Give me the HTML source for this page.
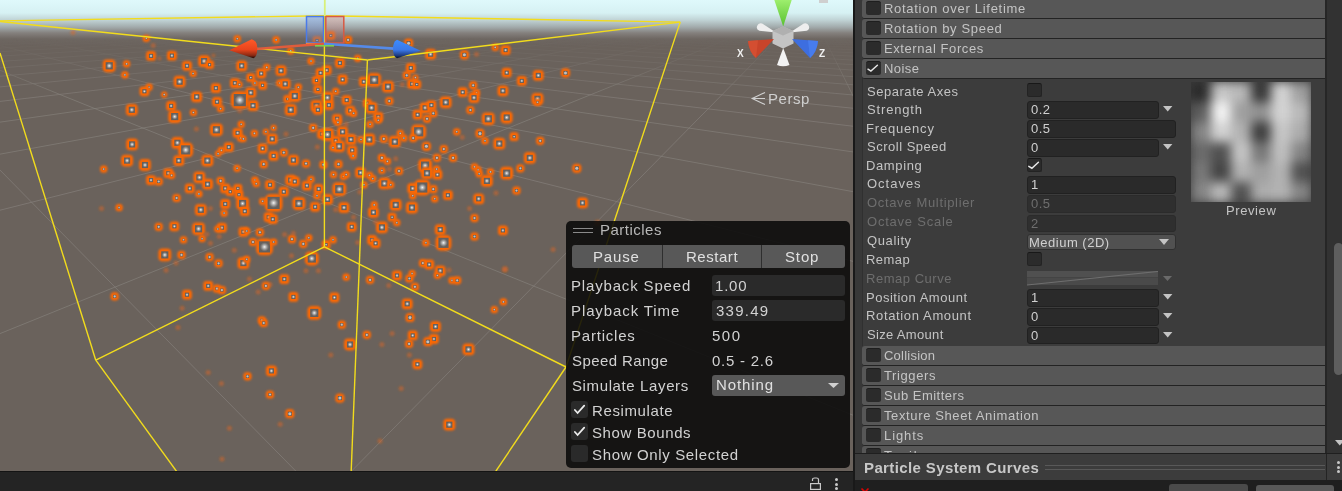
<!DOCTYPE html><html><head><meta charset="utf-8"><style>
html,body{margin:0;padding:0;width:1342px;height:491px;overflow:hidden;background:#383838}
body{position:relative;font-family:"Liberation Sans",sans-serif}
.t{position:absolute;white-space:nowrap;will-change:transform}
.r{position:absolute}
</style></head><body><div id="scene" style="position:absolute;left:0;top:0;width:853px;height:471px;overflow:hidden;background:linear-gradient(#dff9fb 0px,#d6f1f3 13px,#c0d3d5 20px,#a2abac 27px,#84807d 33px,#6d6661 39px,#6a625c 46px,#6a625c 471px)">
<svg width="853" height="471" style="position:absolute;left:0;top:0"><defs><filter id="bl" x="-50%" y="-50%" width="200%" height="200%"><feGaussianBlur stdDeviation="0.8"/></filter><filter id="bl2" x="-50%" y="-50%" width="200%" height="200%"><feGaussianBlur stdDeviation="1"/></filter><radialGradient id="pc"><stop offset="0" stop-color="#fff" stop-opacity="0.95"/><stop offset="0.5" stop-color="#ddd" stop-opacity="0.5"/><stop offset="1" stop-color="#aaa" stop-opacity="0"/></radialGradient></defs><defs><linearGradient id="gm" gradientUnits="userSpaceOnUse" x1="0" y1="0" x2="0" y2="471"><stop offset="0" stop-color="#000"/><stop offset="0.08" stop-color="#000"/><stop offset="0.21" stop-color="#fff"/><stop offset="1" stop-color="#fff"/></linearGradient><mask id="gmask" maskUnits="userSpaceOnUse" x="0" y="0" width="853" height="471"><rect width="853" height="471" fill="url(#gm)"/></mask></defs><g stroke="#85807b" stroke-width="1" fill="none" mask="url(#gmask)"><line x1="731.2" y1="6.7" x2="-3159.6" y2="15.8" stroke-opacity="0.00"/><line x1="731.7" y1="6.7" x2="-3159.5" y2="15.9" stroke-opacity="0.00"/><line x1="732.2" y1="6.7" x2="-3159.5" y2="16.0" stroke-opacity="0.00"/><line x1="732.6" y1="6.7" x2="-3159.5" y2="16.1" stroke-opacity="0.00"/><line x1="733.1" y1="6.7" x2="-3159.5" y2="16.2" stroke-opacity="0.00"/><line x1="733.6" y1="6.7" x2="-3159.5" y2="16.4" stroke-opacity="0.00"/><line x1="734.1" y1="6.7" x2="-3159.4" y2="16.5" stroke-opacity="0.00"/><line x1="734.5" y1="6.7" x2="-3159.4" y2="16.6" stroke-opacity="0.00"/><line x1="735.0" y1="6.7" x2="-3159.4" y2="16.7" stroke-opacity="0.00"/><line x1="735.5" y1="6.7" x2="-3159.4" y2="16.9" stroke-opacity="0.00"/><line x1="736.0" y1="6.7" x2="-3159.3" y2="17.0" stroke-opacity="0.00"/><line x1="736.4" y1="6.7" x2="-3159.3" y2="17.1" stroke-opacity="0.00"/><line x1="736.9" y1="6.7" x2="-3159.3" y2="17.3" stroke-opacity="0.00"/><line x1="737.4" y1="6.7" x2="-3159.3" y2="17.4" stroke-opacity="0.00"/><line x1="737.9" y1="6.7" x2="-3159.2" y2="17.6" stroke-opacity="0.00"/><line x1="738.3" y1="6.7" x2="-3159.2" y2="17.7" stroke-opacity="0.00"/><line x1="738.8" y1="6.7" x2="-3159.2" y2="17.8" stroke-opacity="0.00"/><line x1="739.3" y1="6.7" x2="-3159.2" y2="18.0" stroke-opacity="0.00"/><line x1="739.8" y1="6.7" x2="-3159.1" y2="18.1" stroke-opacity="0.00"/><line x1="740.3" y1="6.7" x2="-3159.1" y2="18.3" stroke-opacity="0.00"/><line x1="740.7" y1="6.7" x2="-3159.1" y2="18.4" stroke-opacity="0.00"/><line x1="741.2" y1="6.7" x2="-3159.1" y2="18.6" stroke-opacity="0.00"/><line x1="741.7" y1="6.7" x2="-3159.0" y2="18.8" stroke-opacity="0.00"/><line x1="742.2" y1="6.7" x2="-3159.0" y2="18.9" stroke-opacity="0.00"/><line x1="742.7" y1="6.7" x2="-3159.0" y2="19.1" stroke-opacity="0.00"/><line x1="743.2" y1="6.7" x2="-3158.9" y2="19.3" stroke-opacity="0.00"/><line x1="743.6" y1="6.7" x2="-3158.9" y2="19.4" stroke-opacity="0.00"/><line x1="744.1" y1="6.7" x2="-3158.9" y2="19.6" stroke-opacity="0.00"/><line x1="744.6" y1="6.7" x2="-3158.9" y2="19.8" stroke-opacity="0.00"/><line x1="745.1" y1="6.7" x2="-3158.8" y2="19.9" stroke-opacity="0.00"/><line x1="745.6" y1="6.7" x2="-3158.8" y2="20.1" stroke-opacity="0.00"/><line x1="746.1" y1="6.7" x2="-3158.8" y2="20.3" stroke-opacity="0.00"/><line x1="746.5" y1="6.7" x2="-3158.7" y2="20.5" stroke-opacity="0.00"/><line x1="747.0" y1="6.7" x2="-3158.7" y2="20.7" stroke-opacity="0.00"/><line x1="747.5" y1="6.7" x2="-3158.7" y2="20.9" stroke-opacity="0.00"/><line x1="748.0" y1="6.7" x2="-3158.6" y2="21.1" stroke-opacity="0.00"/><line x1="748.5" y1="6.7" x2="-3158.6" y2="21.3" stroke-opacity="0.00"/><line x1="749.0" y1="6.7" x2="-3158.5" y2="21.5" stroke-opacity="0.00"/><line x1="749.5" y1="6.7" x2="-3158.5" y2="21.7" stroke-opacity="0.00"/><line x1="750.0" y1="6.7" x2="-3158.5" y2="21.9" stroke-opacity="0.00"/><line x1="750.5" y1="6.8" x2="-3158.4" y2="22.1" stroke-opacity="0.00"/><line x1="750.9" y1="6.8" x2="-3158.4" y2="22.3" stroke-opacity="0.00"/><line x1="751.4" y1="6.8" x2="-3158.4" y2="22.5" stroke-opacity="0.00"/><line x1="751.9" y1="6.8" x2="-3158.3" y2="22.8" stroke-opacity="0.00"/><line x1="752.4" y1="6.8" x2="-3158.3" y2="23.0" stroke-opacity="0.00"/><line x1="752.9" y1="6.8" x2="-3158.2" y2="23.2" stroke-opacity="0.00"/><line x1="753.4" y1="6.8" x2="-3158.2" y2="23.5" stroke-opacity="0.00"/><line x1="753.9" y1="6.8" x2="-3158.1" y2="23.7" stroke-opacity="0.00"/><line x1="754.4" y1="6.8" x2="-3158.1" y2="24.0" stroke-opacity="0.00"/><line x1="754.9" y1="6.8" x2="-3158.1" y2="24.2" stroke-opacity="0.00"/><line x1="755.4" y1="6.8" x2="-3158.0" y2="24.5" stroke-opacity="0.00"/><line x1="755.9" y1="6.8" x2="-3158.0" y2="24.7" stroke-opacity="0.00"/><line x1="756.4" y1="6.8" x2="-3157.9" y2="25.0" stroke-opacity="0.00"/><line x1="756.9" y1="6.8" x2="-3157.9" y2="25.3" stroke-opacity="0.00"/><line x1="757.4" y1="6.8" x2="-3157.8" y2="25.5" stroke-opacity="0.00"/><line x1="757.9" y1="6.8" x2="-3157.8" y2="25.8" stroke-opacity="0.00"/><line x1="758.4" y1="6.8" x2="-3157.7" y2="26.1" stroke-opacity="0.00"/><line x1="758.9" y1="6.8" x2="-3157.7" y2="26.4" stroke-opacity="0.00"/><line x1="759.4" y1="6.8" x2="-3157.6" y2="26.7" stroke-opacity="0.00"/><line x1="759.9" y1="6.8" x2="-3157.5" y2="27.0" stroke-opacity="0.00"/><line x1="760.4" y1="6.8" x2="-3157.5" y2="27.3" stroke-opacity="0.00"/><line x1="760.9" y1="6.8" x2="-3157.4" y2="27.7" stroke-opacity="0.00"/><line x1="761.4" y1="6.8" x2="-3157.4" y2="28.0" stroke-opacity="0.00"/><line x1="761.9" y1="6.8" x2="-3157.3" y2="28.3" stroke-opacity="0.00"/><line x1="762.4" y1="6.8" x2="-3157.2" y2="28.7" stroke-opacity="0.00"/><line x1="762.9" y1="6.8" x2="-3157.2" y2="29.0" stroke-opacity="0.00"/><line x1="763.4" y1="6.8" x2="-3157.1" y2="29.4" stroke-opacity="0.00"/><line x1="763.9" y1="6.8" x2="-3157.1" y2="29.8" stroke-opacity="0.00"/><line x1="764.4" y1="6.8" x2="-3157.0" y2="30.1" stroke-opacity="0.00"/><line x1="764.9" y1="6.8" x2="-3156.9" y2="30.5" stroke-opacity="0.00"/><line x1="765.4" y1="6.8" x2="-3156.8" y2="30.9" stroke-opacity="0.00"/><line x1="765.9" y1="6.8" x2="-3156.8" y2="31.3" stroke-opacity="0.00"/><line x1="766.4" y1="6.8" x2="-3156.7" y2="31.7" stroke-opacity="0.00"/><line x1="766.9" y1="6.8" x2="-3156.6" y2="32.2" stroke-opacity="0.00"/><line x1="767.5" y1="6.8" x2="-3156.5" y2="32.6" stroke-opacity="0.00"/><line x1="768.0" y1="6.8" x2="-3156.5" y2="33.1" stroke-opacity="0.00"/><line x1="768.5" y1="6.8" x2="-3156.4" y2="33.5" stroke-opacity="0.00"/><line x1="769.0" y1="6.8" x2="-3156.3" y2="34.0" stroke-opacity="0.00"/><line x1="769.5" y1="6.8" x2="-3156.2" y2="34.5" stroke-opacity="0.00"/><line x1="770.0" y1="6.8" x2="-3156.1" y2="35.0" stroke-opacity="0.00"/><line x1="770.5" y1="6.8" x2="-3156.0" y2="35.5" stroke-opacity="0.00"/><line x1="771.0" y1="6.8" x2="-3155.9" y2="36.0" stroke-opacity="0.01"/><line x1="771.5" y1="6.8" x2="-3155.8" y2="36.6" stroke-opacity="0.02"/><line x1="772.1" y1="6.8" x2="-3155.7" y2="37.1" stroke-opacity="0.03"/><line x1="772.6" y1="6.8" x2="-3155.6" y2="37.7" stroke-opacity="0.04"/><line x1="773.1" y1="6.8" x2="-3155.5" y2="38.3" stroke-opacity="0.05"/><line x1="773.6" y1="6.8" x2="-3155.4" y2="38.9" stroke-opacity="0.06"/><line x1="774.1" y1="6.8" x2="-3155.3" y2="39.5" stroke-opacity="0.07"/><line x1="774.6" y1="6.8" x2="-3155.2" y2="40.2" stroke-opacity="0.08"/><line x1="775.2" y1="6.8" x2="-3155.0" y2="40.9" stroke-opacity="0.09"/><line x1="775.7" y1="6.8" x2="-3154.9" y2="41.6" stroke-opacity="0.10"/><line x1="776.2" y1="6.8" x2="-3154.8" y2="42.3" stroke-opacity="0.11"/><line x1="776.7" y1="6.8" x2="-3154.6" y2="43.0" stroke-opacity="0.12"/><line x1="777.2" y1="6.8" x2="-3154.5" y2="43.8" stroke-opacity="0.13"/><line x1="777.8" y1="6.8" x2="-3154.4" y2="44.6" stroke-opacity="0.14"/><line x1="778.3" y1="6.8" x2="-3154.2" y2="45.4" stroke-opacity="0.15"/><line x1="778.8" y1="6.8" x2="-3154.1" y2="46.2" stroke-opacity="0.16"/><line x1="779.3" y1="6.8" x2="-3153.9" y2="47.1" stroke-opacity="0.17"/><line x1="779.8" y1="6.8" x2="-3153.7" y2="48.0" stroke-opacity="0.18"/><line x1="780.4" y1="6.8" x2="-3153.5" y2="49.0" stroke-opacity="0.19"/><line x1="780.9" y1="6.8" x2="-3153.4" y2="50.0" stroke-opacity="0.20"/><line x1="781.4" y1="6.8" x2="-3153.2" y2="51.0" stroke-opacity="0.21"/><line x1="781.9" y1="6.8" x2="-3153.0" y2="52.1" stroke-opacity="0.22"/><line x1="782.5" y1="6.8" x2="-3152.8" y2="53.2" stroke-opacity="0.23"/><line x1="783.0" y1="6.8" x2="-3152.6" y2="54.3" stroke-opacity="0.24"/><line x1="783.5" y1="6.8" x2="-3152.3" y2="55.5" stroke-opacity="0.25"/><line x1="784.0" y1="6.8" x2="-3152.1" y2="56.8" stroke-opacity="0.26"/><line x1="784.6" y1="6.8" x2="-3151.9" y2="58.1" stroke-opacity="0.27"/><line x1="785.1" y1="6.8" x2="-3151.6" y2="59.5" stroke-opacity="0.28"/><line x1="785.6" y1="6.8" x2="-3151.4" y2="60.9" stroke-opacity="0.29"/><line x1="786.2" y1="6.8" x2="-3151.1" y2="62.4" stroke-opacity="0.30"/><line x1="786.7" y1="6.8" x2="-3150.8" y2="64.0" stroke-opacity="0.31"/><line x1="787.2" y1="6.8" x2="-3150.5" y2="65.6" stroke-opacity="0.32"/><line x1="787.8" y1="6.8" x2="-3150.1" y2="67.4" stroke-opacity="0.33"/><line x1="788.3" y1="6.8" x2="-3149.8" y2="69.2" stroke-opacity="0.34"/><line x1="788.8" y1="6.8" x2="-3149.4" y2="71.1" stroke-opacity="0.35"/><line x1="789.4" y1="6.8" x2="-3149.1" y2="73.2" stroke-opacity="0.36"/><line x1="789.9" y1="6.9" x2="-3148.7" y2="75.3" stroke-opacity="0.37"/><line x1="790.4" y1="6.9" x2="-3148.2" y2="77.6" stroke-opacity="0.38"/><line x1="791.0" y1="6.9" x2="-3147.8" y2="80.1" stroke-opacity="0.39"/><line x1="791.5" y1="6.9" x2="-3147.3" y2="82.6" stroke-opacity="0.40"/><line x1="792.0" y1="6.9" x2="-3146.8" y2="85.4" stroke-opacity="0.41"/><line x1="792.6" y1="6.9" x2="-3146.2" y2="88.3" stroke-opacity="0.42"/><line x1="793.1" y1="6.9" x2="-3145.6" y2="91.4" stroke-opacity="0.43"/><line x1="793.6" y1="6.9" x2="-3145.0" y2="94.8" stroke-opacity="0.44"/><line x1="794.2" y1="6.9" x2="-3144.3" y2="98.4" stroke-opacity="0.45"/><line x1="794.7" y1="6.9" x2="-3143.5" y2="102.3" stroke-opacity="0.46"/><line x1="795.3" y1="6.9" x2="-3142.7" y2="106.5" stroke-opacity="0.47"/><line x1="795.8" y1="6.9" x2="-3141.9" y2="111.1" stroke-opacity="0.48"/><line x1="796.3" y1="6.9" x2="-3140.9" y2="116.0" stroke-opacity="0.49"/><line x1="796.9" y1="6.9" x2="-3139.9" y2="121.4" stroke-opacity="0.50"/><line x1="797.4" y1="6.9" x2="-3138.7" y2="127.4" stroke-opacity="0.51"/><line x1="798.0" y1="6.9" x2="-3137.4" y2="133.9" stroke-opacity="0.52"/><line x1="798.5" y1="6.9" x2="-3136.0" y2="141.1" stroke-opacity="0.53"/><line x1="799.1" y1="6.9" x2="-3134.4" y2="149.2" stroke-opacity="0.54"/><line x1="799.6" y1="6.9" x2="-3132.6" y2="158.2" stroke-opacity="0.55"/><line x1="800.1" y1="6.9" x2="-3130.6" y2="168.3" stroke-opacity="0.56"/><line x1="800.7" y1="6.9" x2="-3128.2" y2="179.8" stroke-opacity="0.57"/><line x1="801.2" y1="6.9" x2="-3125.6" y2="193.0" stroke-opacity="0.58"/><line x1="801.8" y1="6.9" x2="-3122.4" y2="208.2" stroke-opacity="0.59"/><line x1="802.3" y1="6.9" x2="-3118.7" y2="226.0" stroke-opacity="0.60"/><line x1="802.9" y1="6.9" x2="-3114.2" y2="247.1" stroke-opacity="0.61"/><line x1="803.4" y1="6.9" x2="-3108.7" y2="272.5" stroke-opacity="0.62"/><line x1="804.0" y1="6.9" x2="-3101.8" y2="303.6" stroke-opacity="0.63"/><line x1="804.5" y1="6.9" x2="-3093.0" y2="342.7" stroke-opacity="0.64"/><line x1="805.1" y1="6.9" x2="-3081.1" y2="393.2" stroke-opacity="0.65"/><line x1="805.6" y1="6.9" x2="-3064.6" y2="461.0" stroke-opacity="0.66"/><line x1="806.2" y1="6.9" x2="-3039.7" y2="556.7" stroke-opacity="0.67"/><line x1="806.7" y1="6.9" x2="-2998.8" y2="701.6" stroke-opacity="0.68"/><line x1="807.3" y1="6.9" x2="-2920.3" y2="945.7" stroke-opacity="0.69"/><line x1="807.8" y1="6.9" x2="-2722.1" y2="1434.5" stroke-opacity="0.70"/><line x1="808.4" y1="6.9" x2="-1853.6" y2="2711.6" stroke-opacity="0.69"/><line x1="809.0" y1="6.9" x2="2885.0" y2="4202.1" stroke-opacity="0.68"/><line x1="809.5" y1="6.9" x2="6452.1" y2="2878.9" stroke-opacity="0.67"/><line x1="810.1" y1="6.9" x2="8882.4" y2="2363.6" stroke-opacity="0.66"/><line x1="810.6" y1="6.9" x2="11165.5" y2="2130.2" stroke-opacity="0.65"/><line x1="811.2" y1="6.9" x2="13413.8" y2="2001.2" stroke-opacity="0.64"/><line x1="811.7" y1="6.9" x2="15650.1" y2="1920.9" stroke-opacity="0.63"/><line x1="812.3" y1="6.9" x2="17881.2" y2="1866.8" stroke-opacity="0.62"/><line x1="812.9" y1="6.9" x2="20109.6" y2="1828.5" stroke-opacity="0.61"/><line x1="813.4" y1="6.9" x2="22336.6" y2="1800.5" stroke-opacity="0.60"/><line x1="814.0" y1="6.9" x2="24562.7" y2="1779.4" stroke-opacity="0.59"/><line x1="814.5" y1="6.9" x2="26788.2" y2="1763.2" stroke-opacity="0.58"/><line x1="815.1" y1="6.9" x2="29013.4" y2="1750.7" stroke-opacity="0.57"/><line x1="815.7" y1="6.9" x2="31238.3" y2="1741.0" stroke-opacity="0.56"/><line x1="816.2" y1="6.9" x2="33463.1" y2="1733.5" stroke-opacity="0.55"/><line x1="816.8" y1="6.9" x2="35687.7" y2="1727.7" stroke-opacity="0.54"/><line x1="817.4" y1="6.9" x2="37912.2" y2="1723.2" stroke-opacity="0.53"/><line x1="817.9" y1="6.9" x2="40136.6" y2="1719.9" stroke-opacity="0.52"/><line x1="818.5" y1="6.9" x2="42361.0" y2="1717.5" stroke-opacity="0.51"/><line x1="819.1" y1="6.9" x2="44585.3" y2="1715.9" stroke-opacity="0.50"/><line x1="819.6" y1="6.9" x2="46809.5" y2="1714.9" stroke-opacity="0.49"/><line x1="820.2" y1="6.9" x2="49033.8" y2="1714.5" stroke-opacity="0.48"/><line x1="820.8" y1="6.9" x2="51258.0" y2="1714.6" stroke-opacity="0.47"/><line x1="821.3" y1="6.9" x2="53482.2" y2="1715.1" stroke-opacity="0.46"/><line x1="821.9" y1="6.9" x2="55706.4" y2="1715.9" stroke-opacity="0.45"/><line x1="822.5" y1="6.9" x2="57930.6" y2="1717.1" stroke-opacity="0.44"/><line x1="823.1" y1="6.9" x2="60154.7" y2="1718.5" stroke-opacity="0.43"/><line x1="823.6" y1="6.9" x2="62378.9" y2="1720.3" stroke-opacity="0.42"/><line x1="824.2" y1="6.9" x2="64603.0" y2="1722.2" stroke-opacity="0.41"/><line x1="824.8" y1="6.9" x2="66827.1" y2="1724.3" stroke-opacity="0.40"/><line x1="825.3" y1="6.9" x2="69051.3" y2="1726.6" stroke-opacity="0.39"/><line x1="825.9" y1="6.9" x2="71275.4" y2="1729.1" stroke-opacity="0.38"/><line x1="826.5" y1="6.9" x2="73499.5" y2="1731.7" stroke-opacity="0.37"/><line x1="827.1" y1="6.9" x2="75723.6" y2="1734.4" stroke-opacity="0.36"/><line x1="827.7" y1="6.9" x2="77947.7" y2="1737.3" stroke-opacity="0.35"/><line x1="828.2" y1="6.9" x2="80171.8" y2="1740.3" stroke-opacity="0.34"/><line x1="828.8" y1="6.9" x2="82395.9" y2="1743.4" stroke-opacity="0.33"/><line x1="829.4" y1="6.9" x2="84620.0" y2="1746.5" stroke-opacity="0.32"/><line x1="830.0" y1="7.0" x2="86844.1" y2="1749.8" stroke-opacity="0.31"/><line x1="-86.4" y1="4.9" x2="3805.8" y2="30.4" stroke-opacity="0.00"/><line x1="-86.9" y1="4.9" x2="3805.8" y2="30.5" stroke-opacity="0.00"/><line x1="-87.4" y1="4.9" x2="3805.8" y2="30.6" stroke-opacity="0.00"/><line x1="-87.8" y1="4.9" x2="3805.8" y2="30.7" stroke-opacity="0.00"/><line x1="-88.3" y1="4.9" x2="3805.8" y2="30.8" stroke-opacity="0.00"/><line x1="-88.8" y1="4.9" x2="3805.7" y2="30.9" stroke-opacity="0.00"/><line x1="-89.2" y1="4.9" x2="3805.7" y2="31.1" stroke-opacity="0.00"/><line x1="-89.7" y1="4.9" x2="3805.7" y2="31.2" stroke-opacity="0.00"/><line x1="-90.2" y1="4.9" x2="3805.7" y2="31.3" stroke-opacity="0.00"/><line x1="-90.6" y1="4.9" x2="3805.7" y2="31.4" stroke-opacity="0.00"/><line x1="-91.1" y1="4.9" x2="3805.6" y2="31.6" stroke-opacity="0.00"/><line x1="-91.6" y1="4.9" x2="3805.6" y2="31.7" stroke-opacity="0.00"/><line x1="-92.0" y1="4.9" x2="3805.6" y2="31.8" stroke-opacity="0.00"/><line x1="-92.5" y1="4.9" x2="3805.6" y2="32.0" stroke-opacity="0.00"/><line x1="-93.0" y1="4.9" x2="3805.5" y2="32.1" stroke-opacity="0.00"/><line x1="-93.4" y1="4.9" x2="3805.5" y2="32.3" stroke-opacity="0.00"/><line x1="-93.9" y1="4.9" x2="3805.5" y2="32.4" stroke-opacity="0.00"/><line x1="-94.4" y1="4.9" x2="3805.5" y2="32.5" stroke-opacity="0.00"/><line x1="-94.9" y1="4.9" x2="3805.4" y2="32.7" stroke-opacity="0.00"/><line x1="-95.3" y1="4.9" x2="3805.4" y2="32.8" stroke-opacity="0.00"/><line x1="-95.8" y1="4.9" x2="3805.4" y2="33.0" stroke-opacity="0.00"/><line x1="-96.3" y1="4.9" x2="3805.4" y2="33.1" stroke-opacity="0.00"/><line x1="-96.7" y1="4.9" x2="3805.3" y2="33.3" stroke-opacity="0.00"/><line x1="-97.2" y1="4.9" x2="3805.3" y2="33.5" stroke-opacity="0.00"/><line x1="-97.7" y1="4.9" x2="3805.3" y2="33.6" stroke-opacity="0.00"/><line x1="-98.2" y1="4.9" x2="3805.3" y2="33.8" stroke-opacity="0.00"/><line x1="-98.6" y1="4.9" x2="3805.2" y2="34.0" stroke-opacity="0.00"/><line x1="-99.1" y1="4.9" x2="3805.2" y2="34.1" stroke-opacity="0.00"/><line x1="-99.6" y1="4.9" x2="3805.2" y2="34.3" stroke-opacity="0.00"/><line x1="-100.1" y1="4.9" x2="3805.1" y2="34.5" stroke-opacity="0.00"/><line x1="-100.6" y1="4.9" x2="3805.1" y2="34.6" stroke-opacity="0.00"/><line x1="-101.0" y1="4.9" x2="3805.1" y2="34.8" stroke-opacity="0.00"/><line x1="-101.5" y1="4.9" x2="3805.1" y2="35.0" stroke-opacity="0.00"/><line x1="-102.0" y1="4.9" x2="3805.0" y2="35.2" stroke-opacity="0.00"/><line x1="-102.5" y1="4.9" x2="3805.0" y2="35.4" stroke-opacity="0.00"/><line x1="-103.0" y1="4.9" x2="3805.0" y2="35.6" stroke-opacity="0.00"/><line x1="-103.4" y1="4.9" x2="3804.9" y2="35.8" stroke-opacity="0.00"/><line x1="-103.9" y1="4.9" x2="3804.9" y2="36.0" stroke-opacity="0.00"/><line x1="-104.4" y1="4.9" x2="3804.9" y2="36.2" stroke-opacity="0.00"/><line x1="-104.9" y1="4.9" x2="3804.8" y2="36.4" stroke-opacity="0.00"/><line x1="-105.4" y1="4.9" x2="3804.8" y2="36.6" stroke-opacity="0.00"/><line x1="-105.8" y1="4.9" x2="3804.8" y2="36.8" stroke-opacity="0.00"/><line x1="-106.3" y1="4.9" x2="3804.7" y2="37.0" stroke-opacity="0.00"/><line x1="-106.8" y1="4.9" x2="3804.7" y2="37.2" stroke-opacity="0.00"/><line x1="-107.3" y1="4.9" x2="3804.6" y2="37.5" stroke-opacity="0.00"/><line x1="-107.8" y1="4.9" x2="3804.6" y2="37.7" stroke-opacity="0.00"/><line x1="-108.3" y1="4.9" x2="3804.6" y2="37.9" stroke-opacity="0.00"/><line x1="-108.8" y1="4.9" x2="3804.5" y2="38.2" stroke-opacity="0.00"/><line x1="-109.2" y1="4.9" x2="3804.5" y2="38.4" stroke-opacity="0.00"/><line x1="-109.7" y1="4.9" x2="3804.4" y2="38.7" stroke-opacity="0.00"/><line x1="-110.2" y1="4.9" x2="3804.4" y2="38.9" stroke-opacity="0.00"/><line x1="-110.7" y1="4.9" x2="3804.4" y2="39.2" stroke-opacity="0.00"/><line x1="-111.2" y1="4.9" x2="3804.3" y2="39.4" stroke-opacity="0.00"/><line x1="-111.7" y1="4.9" x2="3804.3" y2="39.7" stroke-opacity="0.00"/><line x1="-112.2" y1="4.9" x2="3804.2" y2="40.0" stroke-opacity="0.00"/><line x1="-112.7" y1="4.9" x2="3804.2" y2="40.3" stroke-opacity="0.00"/><line x1="-113.2" y1="4.9" x2="3804.1" y2="40.5" stroke-opacity="0.00"/><line x1="-113.7" y1="4.9" x2="3804.1" y2="40.8" stroke-opacity="0.00"/><line x1="-114.2" y1="4.9" x2="3804.0" y2="41.1" stroke-opacity="0.00"/><line x1="-114.6" y1="4.9" x2="3804.0" y2="41.4" stroke-opacity="0.00"/><line x1="-115.1" y1="4.9" x2="3803.9" y2="41.7" stroke-opacity="0.00"/><line x1="-115.6" y1="4.9" x2="3803.9" y2="42.1" stroke-opacity="0.00"/><line x1="-116.1" y1="4.9" x2="3803.8" y2="42.4" stroke-opacity="0.00"/><line x1="-116.6" y1="4.9" x2="3803.7" y2="42.7" stroke-opacity="0.00"/><line x1="-117.1" y1="4.9" x2="3803.7" y2="43.1" stroke-opacity="0.00"/><line x1="-117.6" y1="4.9" x2="3803.6" y2="43.4" stroke-opacity="0.00"/><line x1="-118.1" y1="4.9" x2="3803.6" y2="43.8" stroke-opacity="0.00"/><line x1="-118.6" y1="4.9" x2="3803.5" y2="44.1" stroke-opacity="0.00"/><line x1="-119.1" y1="4.9" x2="3803.4" y2="44.5" stroke-opacity="0.00"/><line x1="-119.6" y1="4.9" x2="3803.4" y2="44.9" stroke-opacity="0.00"/><line x1="-120.1" y1="4.9" x2="3803.3" y2="45.3" stroke-opacity="0.00"/><line x1="-120.6" y1="4.9" x2="3803.2" y2="45.7" stroke-opacity="0.00"/><line x1="-121.1" y1="4.9" x2="3803.2" y2="46.1" stroke-opacity="0.00"/><line x1="-121.6" y1="4.9" x2="3803.1" y2="46.5" stroke-opacity="0.00"/><line x1="-122.1" y1="4.9" x2="3803.0" y2="46.9" stroke-opacity="0.00"/><line x1="-122.6" y1="4.9" x2="3802.9" y2="47.4" stroke-opacity="0.00"/><line x1="-123.1" y1="4.9" x2="3802.9" y2="47.8" stroke-opacity="0.00"/><line x1="-123.6" y1="4.9" x2="3802.8" y2="48.3" stroke-opacity="0.00"/><line x1="-124.1" y1="4.9" x2="3802.7" y2="48.8" stroke-opacity="0.00"/><line x1="-124.6" y1="4.9" x2="3802.6" y2="49.3" stroke-opacity="0.00"/><line x1="-125.1" y1="4.9" x2="3802.5" y2="49.8" stroke-opacity="0.00"/><line x1="-125.6" y1="4.9" x2="3802.4" y2="50.3" stroke-opacity="0.01"/><line x1="-126.1" y1="4.9" x2="3802.4" y2="50.8" stroke-opacity="0.02"/><line x1="-126.6" y1="4.9" x2="3802.3" y2="51.4" stroke-opacity="0.03"/><line x1="-127.1" y1="4.9" x2="3802.2" y2="51.9" stroke-opacity="0.04"/><line x1="-127.6" y1="4.9" x2="3802.1" y2="52.5" stroke-opacity="0.05"/><line x1="-128.2" y1="4.9" x2="3802.0" y2="53.1" stroke-opacity="0.06"/><line x1="-128.7" y1="4.9" x2="3801.9" y2="53.8" stroke-opacity="0.07"/><line x1="-129.2" y1="4.9" x2="3801.7" y2="54.4" stroke-opacity="0.08"/><line x1="-129.7" y1="4.9" x2="3801.6" y2="55.1" stroke-opacity="0.09"/><line x1="-130.2" y1="4.9" x2="3801.5" y2="55.7" stroke-opacity="0.10"/><line x1="-130.7" y1="4.9" x2="3801.4" y2="56.4" stroke-opacity="0.11"/><line x1="-131.2" y1="4.9" x2="3801.3" y2="57.2" stroke-opacity="0.12"/><line x1="-131.7" y1="4.9" x2="3801.1" y2="57.9" stroke-opacity="0.13"/><line x1="-132.2" y1="4.9" x2="3801.0" y2="58.7" stroke-opacity="0.14"/><line x1="-132.7" y1="4.9" x2="3800.9" y2="59.5" stroke-opacity="0.15"/><line x1="-133.3" y1="4.9" x2="3800.7" y2="60.3" stroke-opacity="0.16"/><line x1="-133.8" y1="4.9" x2="3800.6" y2="61.2" stroke-opacity="0.17"/><line x1="-134.3" y1="4.9" x2="3800.4" y2="62.1" stroke-opacity="0.18"/><line x1="-134.8" y1="4.9" x2="3800.2" y2="63.0" stroke-opacity="0.19"/><line x1="-135.3" y1="4.9" x2="3800.1" y2="64.0" stroke-opacity="0.20"/><line x1="-135.8" y1="4.9" x2="3799.9" y2="65.0" stroke-opacity="0.21"/><line x1="-136.4" y1="4.9" x2="3799.7" y2="66.1" stroke-opacity="0.22"/><line x1="-136.9" y1="4.9" x2="3799.5" y2="67.2" stroke-opacity="0.23"/><line x1="-137.4" y1="4.9" x2="3799.3" y2="68.3" stroke-opacity="0.24"/><line x1="-137.9" y1="4.9" x2="3799.1" y2="69.5" stroke-opacity="0.25"/><line x1="-138.4" y1="4.9" x2="3798.9" y2="70.7" stroke-opacity="0.26"/><line x1="-138.9" y1="4.9" x2="3798.7" y2="72.0" stroke-opacity="0.27"/><line x1="-139.5" y1="4.9" x2="3798.4" y2="73.3" stroke-opacity="0.28"/><line x1="-140.0" y1="4.9" x2="3798.2" y2="74.8" stroke-opacity="0.29"/><line x1="-140.5" y1="4.9" x2="3797.9" y2="76.2" stroke-opacity="0.30"/><line x1="-141.0" y1="4.9" x2="3797.7" y2="77.8" stroke-opacity="0.31"/><line x1="-141.5" y1="4.8" x2="3797.4" y2="79.4" stroke-opacity="0.32"/><line x1="-142.1" y1="4.8" x2="3797.1" y2="81.1" stroke-opacity="0.33"/><line x1="-142.6" y1="4.8" x2="3796.8" y2="82.9" stroke-opacity="0.34"/><line x1="-143.1" y1="4.8" x2="3796.4" y2="84.8" stroke-opacity="0.35"/><line x1="-143.6" y1="4.8" x2="3796.1" y2="86.9" stroke-opacity="0.36"/><line x1="-144.2" y1="4.8" x2="3795.7" y2="89.0" stroke-opacity="0.37"/><line x1="-144.7" y1="4.8" x2="3795.3" y2="91.2" stroke-opacity="0.38"/><line x1="-145.2" y1="4.8" x2="3794.9" y2="93.6" stroke-opacity="0.39"/><line x1="-145.7" y1="4.8" x2="3794.4" y2="96.2" stroke-opacity="0.40"/><line x1="-146.3" y1="4.8" x2="3793.9" y2="98.9" stroke-opacity="0.41"/><line x1="-146.8" y1="4.8" x2="3793.4" y2="101.8" stroke-opacity="0.42"/><line x1="-147.3" y1="4.8" x2="3792.9" y2="104.8" stroke-opacity="0.43"/><line x1="-147.9" y1="4.8" x2="3792.3" y2="108.2" stroke-opacity="0.44"/><line x1="-148.4" y1="4.8" x2="3791.6" y2="111.7" stroke-opacity="0.45"/><line x1="-148.9" y1="4.8" x2="3790.9" y2="115.5" stroke-opacity="0.46"/><line x1="-149.4" y1="4.8" x2="3790.2" y2="119.7" stroke-opacity="0.47"/><line x1="-150.0" y1="4.8" x2="3789.3" y2="124.2" stroke-opacity="0.48"/><line x1="-150.5" y1="4.8" x2="3788.4" y2="129.1" stroke-opacity="0.49"/><line x1="-151.0" y1="4.8" x2="3787.5" y2="134.4" stroke-opacity="0.50"/><line x1="-151.6" y1="4.8" x2="3786.4" y2="140.2" stroke-opacity="0.51"/><line x1="-152.1" y1="4.8" x2="3785.2" y2="146.7" stroke-opacity="0.52"/><line x1="-152.6" y1="4.8" x2="3783.8" y2="153.8" stroke-opacity="0.53"/><line x1="-153.2" y1="4.8" x2="3782.4" y2="161.7" stroke-opacity="0.54"/><line x1="-153.7" y1="4.8" x2="3780.7" y2="170.6" stroke-opacity="0.55"/><line x1="-154.3" y1="4.8" x2="3778.8" y2="180.6" stroke-opacity="0.56"/><line x1="-154.8" y1="4.8" x2="3776.6" y2="191.9" stroke-opacity="0.57"/><line x1="-155.3" y1="4.8" x2="3774.0" y2="204.9" stroke-opacity="0.58"/><line x1="-155.9" y1="4.8" x2="3771.1" y2="219.9" stroke-opacity="0.59"/><line x1="-156.4" y1="4.8" x2="3767.6" y2="237.4" stroke-opacity="0.60"/><line x1="-156.9" y1="4.8" x2="3763.3" y2="258.3" stroke-opacity="0.61"/><line x1="-157.5" y1="4.8" x2="3758.1" y2="283.3" stroke-opacity="0.62"/><line x1="-158.0" y1="4.8" x2="3751.6" y2="314.0" stroke-opacity="0.63"/><line x1="-158.6" y1="4.8" x2="3743.2" y2="352.6" stroke-opacity="0.64"/><line x1="-159.1" y1="4.8" x2="3732.0" y2="402.5" stroke-opacity="0.65"/><line x1="-159.6" y1="4.8" x2="3716.1" y2="469.6" stroke-opacity="0.66"/><line x1="-160.2" y1="4.8" x2="3692.4" y2="564.2" stroke-opacity="0.67"/><line x1="-160.7" y1="4.8" x2="3653.0" y2="707.8" stroke-opacity="0.68"/><line x1="-161.3" y1="4.8" x2="3577.0" y2="950.4" stroke-opacity="0.69"/><line x1="-161.8" y1="4.8" x2="3383.1" y2="1438.4" stroke-opacity="0.70"/><line x1="-162.4" y1="4.8" x2="2517.2" y2="2731.7" stroke-opacity="0.69"/><line x1="-162.9" y1="4.8" x2="-2292.6" y2="4123.4" stroke-opacity="0.68"/><line x1="-163.5" y1="4.8" x2="-5790.3" y2="2781.4" stroke-opacity="0.67"/><line x1="-164.0" y1="4.8" x2="-8172.7" y2="2263.6" stroke-opacity="0.66"/><line x1="-164.6" y1="4.8" x2="-10414.1" y2="2024.6" stroke-opacity="0.65"/><line x1="-165.1" y1="4.8" x2="-12622.3" y2="1888.4" stroke-opacity="0.64"/><line x1="-165.6" y1="4.8" x2="-14819.1" y2="1800.0" stroke-opacity="0.63"/><line x1="-166.2" y1="4.8" x2="-17011.0" y2="1737.5" stroke-opacity="0.62"/><line x1="-166.7" y1="4.8" x2="-19200.4" y2="1690.6" stroke-opacity="0.61"/><line x1="-167.3" y1="4.8" x2="-21388.4" y2="1653.6" stroke-opacity="0.60"/><line x1="-167.9" y1="4.8" x2="-23575.6" y2="1623.5" stroke-opacity="0.59"/><line x1="-168.4" y1="4.8" x2="-25762.3" y2="1598.3" stroke-opacity="0.58"/><line x1="-169.0" y1="4.8" x2="-27948.6" y2="1576.7" stroke-opacity="0.57"/><line x1="-169.5" y1="4.8" x2="-30134.8" y2="1557.8" stroke-opacity="0.56"/><line x1="-170.1" y1="4.8" x2="-32320.7" y2="1541.1" stroke-opacity="0.55"/><line x1="-170.6" y1="4.8" x2="-34506.5" y2="1526.0" stroke-opacity="0.54"/><line x1="-171.2" y1="4.8" x2="-36692.3" y2="1512.3" stroke-opacity="0.53"/><line x1="-171.7" y1="4.8" x2="-38877.9" y2="1499.7" stroke-opacity="0.52"/><line x1="-172.3" y1="4.8" x2="-41063.5" y2="1488.0" stroke-opacity="0.51"/><line x1="-172.8" y1="4.8" x2="-43249.1" y2="1477.1" stroke-opacity="0.50"/><line x1="-173.4" y1="4.8" x2="-45434.6" y2="1466.8" stroke-opacity="0.49"/><line x1="-174.0" y1="4.8" x2="-47620.1" y2="1457.0" stroke-opacity="0.48"/><line x1="-174.5" y1="4.8" x2="-49805.6" y2="1447.8" stroke-opacity="0.47"/><line x1="-175.1" y1="4.8" x2="-51991.1" y2="1438.9" stroke-opacity="0.46"/><line x1="-175.6" y1="4.8" x2="-54176.5" y2="1430.4" stroke-opacity="0.45"/><line x1="-176.2" y1="4.8" x2="-56362.0" y2="1422.3" stroke-opacity="0.44"/><line x1="-176.8" y1="4.8" x2="-58547.4" y2="1414.4" stroke-opacity="0.43"/><line x1="-177.3" y1="4.8" x2="-60732.8" y2="1406.7" stroke-opacity="0.42"/><line x1="-177.9" y1="4.8" x2="-62918.2" y2="1399.3" stroke-opacity="0.41"/><line x1="-178.4" y1="4.8" x2="-65103.6" y2="1392.0" stroke-opacity="0.40"/><line x1="-179.0" y1="4.8" x2="-67289.0" y2="1385.0" stroke-opacity="0.39"/><line x1="-179.6" y1="4.8" x2="-69474.4" y2="1378.0" stroke-opacity="0.38"/><line x1="-180.1" y1="4.8" x2="-71659.8" y2="1371.3" stroke-opacity="0.37"/><line x1="-180.7" y1="4.8" x2="-73845.2" y2="1364.6" stroke-opacity="0.36"/><line x1="-181.3" y1="4.8" x2="-76030.6" y2="1358.1" stroke-opacity="0.35"/><line x1="-181.8" y1="4.8" x2="-78215.9" y2="1351.7" stroke-opacity="0.34"/><line x1="-182.4" y1="4.8" x2="-80401.3" y2="1345.4" stroke-opacity="0.33"/><line x1="-183.0" y1="4.8" x2="-82586.7" y2="1339.2" stroke-opacity="0.32"/><line x1="-183.5" y1="4.8" x2="-84772.0" y2="1333.0" stroke-opacity="0.31"/></g><rect x="102.8" y="59.4" width="12.8" height="12.8" rx="4.1" fill="#ff6800" filter="url(#bl)"/><rect x="105.6" y="62.2" width="7.2" height="7.2" fill="#64605e"/><circle cx="109.2" cy="65.8" r="3.0" fill="url(#pc)"/><rect x="123.0" y="60.3" width="7.2" height="7.2" rx="3.0" fill="#ff6800" filter="url(#bl)"/><rect x="125.5" y="62.8" width="2.2" height="2.2" fill="#64605e"/><circle cx="126.6" cy="63.9" r="0.8" fill="#d8d8d8" fill-opacity="0.8"/><rect x="121.3" y="71.3" width="7.2" height="7.2" rx="3.0" fill="#ff6800" filter="url(#bl)"/><rect x="123.8" y="73.8" width="2.2" height="2.2" fill="#64605e"/><circle cx="124.9" cy="74.9" r="0.8" fill="#d8d8d8" fill-opacity="0.8"/><rect x="146.1" y="51.0" width="9.8" height="9.8" rx="3.1" fill="#ff6800" filter="url(#bl)"/><rect x="148.9" y="53.8" width="4.2" height="4.2" fill="#64605e"/><circle cx="151.0" cy="55.9" r="1.8" fill="url(#pc)"/><rect x="167.0" y="50.7" width="9.8" height="9.8" rx="3.1" fill="#ff6800" filter="url(#bl)"/><rect x="169.8" y="53.5" width="4.2" height="4.2" fill="#64605e"/><circle cx="171.9" cy="55.6" r="1.8" fill="url(#pc)"/><circle cx="153.2" cy="45.4" r="2.5" fill="#e0661e" fill-opacity="0.5" filter="url(#bl2)"/><rect x="142.7" y="34.7" width="7.2" height="7.2" rx="3.0" fill="#ff6800" filter="url(#bl)"/><rect x="145.2" y="37.2" width="2.2" height="2.2" fill="#64605e"/><circle cx="146.3" cy="38.3" r="0.8" fill="#d8d8d8" fill-opacity="0.8"/><circle cx="159.5" cy="58.4" r="2.0" fill="#e0661e" fill-opacity="0.5" filter="url(#bl2)"/><rect x="182.1" y="60.9" width="9.8" height="9.8" rx="3.1" fill="#ff6800" filter="url(#bl)"/><rect x="184.9" y="63.7" width="4.2" height="4.2" fill="#64605e"/><circle cx="187.0" cy="65.8" r="1.8" fill="url(#pc)"/><rect x="189.5" y="69.9" width="7.2" height="7.2" rx="3.0" fill="#ff6800" filter="url(#bl)"/><rect x="192.0" y="72.4" width="2.2" height="2.2" fill="#64605e"/><circle cx="193.1" cy="73.5" r="0.8" fill="#d8d8d8" fill-opacity="0.8"/><rect x="198.2" y="55.2" width="11.8" height="11.8" rx="3.8" fill="#ff6800" filter="url(#bl)"/><rect x="201.0" y="58.0" width="6.2" height="6.2" fill="#64605e"/><circle cx="204.1" cy="61.1" r="2.6" fill="url(#pc)"/><rect x="205.2" y="60.3" width="8.8" height="8.8" rx="2.8" fill="#ff6800" filter="url(#bl)"/><rect x="208.0" y="63.1" width="3.2" height="3.2" fill="#64605e"/><circle cx="209.6" cy="64.7" r="1.3" fill="url(#pc)"/><circle cx="213.4" cy="55.6" r="2.0" fill="#e0661e" fill-opacity="0.5" filter="url(#bl2)"/><rect x="173.7" y="75.8" width="11.8" height="11.8" rx="3.8" fill="#ff6800" filter="url(#bl)"/><rect x="176.5" y="78.6" width="6.2" height="6.2" fill="#64605e"/><circle cx="179.6" cy="81.7" r="2.6" fill="url(#pc)"/><rect x="145.5" y="83.6" width="7.2" height="7.2" rx="3.0" fill="#ff6800" filter="url(#bl)"/><rect x="148.0" y="86.1" width="2.2" height="2.2" fill="#64605e"/><circle cx="149.1" cy="87.2" r="0.8" fill="#d8d8d8" fill-opacity="0.8"/><rect x="139.5" y="86.4" width="9.8" height="9.8" rx="3.1" fill="#ff6800" filter="url(#bl)"/><rect x="142.3" y="89.2" width="4.2" height="4.2" fill="#64605e"/><circle cx="144.4" cy="91.3" r="1.8" fill="url(#pc)"/><rect x="161.1" y="91.5" width="6.2" height="6.2" rx="2.6" fill="#ff6800" filter="url(#bl)"/><rect x="163.1" y="93.5" width="2.2" height="2.2" fill="#64605e"/><circle cx="164.2" cy="94.6" r="0.8" fill="#d8d8d8" fill-opacity="0.8"/><rect x="191.3" y="91.4" width="10.8" height="10.8" rx="3.5" fill="#ff6800" filter="url(#bl)"/><rect x="194.1" y="94.2" width="5.2" height="5.2" fill="#64605e"/><circle cx="196.7" cy="96.8" r="2.2" fill="url(#pc)"/><rect x="211.0" y="83.2" width="9.8" height="9.8" rx="3.1" fill="#ff6800" filter="url(#bl)"/><rect x="213.8" y="86.0" width="4.2" height="4.2" fill="#64605e"/><circle cx="215.9" cy="88.1" r="1.8" fill="url(#pc)"/><rect x="233.7" y="35.2" width="7.2" height="7.2" rx="3.0" fill="#ff6800" filter="url(#bl)"/><rect x="236.2" y="37.7" width="2.2" height="2.2" fill="#64605e"/><circle cx="237.3" cy="38.8" r="0.8" fill="#d8d8d8" fill-opacity="0.8"/><rect x="272.5" y="36.3" width="7.2" height="7.2" rx="3.0" fill="#ff6800" filter="url(#bl)"/><rect x="275.0" y="38.8" width="2.2" height="2.2" fill="#64605e"/><circle cx="276.1" cy="39.9" r="0.8" fill="#d8d8d8" fill-opacity="0.8"/><rect x="236.3" y="60.4" width="10.8" height="10.8" rx="3.5" fill="#ff6800" filter="url(#bl)"/><rect x="239.1" y="63.2" width="5.2" height="5.2" fill="#64605e"/><circle cx="241.7" cy="65.8" r="2.2" fill="url(#pc)"/><rect x="246.4" y="73.2" width="8.8" height="8.8" rx="2.8" fill="#ff6800" filter="url(#bl)"/><rect x="249.2" y="76.0" width="3.2" height="3.2" fill="#64605e"/><circle cx="250.8" cy="77.6" r="1.3" fill="url(#pc)"/><rect x="256.3" y="68.6" width="9.8" height="9.8" rx="3.1" fill="#ff6800" filter="url(#bl)"/><rect x="259.1" y="71.4" width="4.2" height="4.2" fill="#64605e"/><circle cx="261.2" cy="73.5" r="1.8" fill="url(#pc)"/><rect x="263.1" y="63.8" width="7.2" height="7.2" rx="3.0" fill="#ff6800" filter="url(#bl)"/><rect x="265.6" y="66.3" width="2.2" height="2.2" fill="#64605e"/><circle cx="266.7" cy="67.4" r="0.8" fill="#d8d8d8" fill-opacity="0.8"/><rect x="275.6" y="65.3" width="10.8" height="10.8" rx="3.5" fill="#ff6800" filter="url(#bl)"/><rect x="278.4" y="68.1" width="5.2" height="5.2" fill="#64605e"/><circle cx="281.0" cy="70.7" r="2.2" fill="url(#pc)"/><rect x="230.0" y="78.2" width="9.8" height="9.8" rx="3.1" fill="#ff6800" filter="url(#bl)"/><rect x="232.8" y="81.0" width="4.2" height="4.2" fill="#64605e"/><circle cx="234.9" cy="83.1" r="1.8" fill="url(#pc)"/><rect x="236.4" y="81.4" width="6.2" height="6.2" rx="2.6" fill="#ff6800" filter="url(#bl)"/><rect x="238.4" y="83.4" width="2.2" height="2.2" fill="#64605e"/><circle cx="239.5" cy="84.5" r="0.8" fill="#d8d8d8" fill-opacity="0.8"/><rect x="251.8" y="80.0" width="6.2" height="6.2" rx="2.6" fill="#ff6800" filter="url(#bl)"/><rect x="253.8" y="82.0" width="2.2" height="2.2" fill="#64605e"/><circle cx="254.9" cy="83.1" r="0.8" fill="#d8d8d8" fill-opacity="0.8"/><rect x="258.2" y="80.9" width="8.8" height="8.8" rx="2.8" fill="#ff6800" filter="url(#bl)"/><rect x="261.0" y="83.7" width="3.2" height="3.2" fill="#64605e"/><circle cx="262.6" cy="85.3" r="1.3" fill="url(#pc)"/><rect x="276.1" y="79.5" width="7.2" height="7.2" rx="3.0" fill="#ff6800" filter="url(#bl)"/><rect x="278.6" y="82.0" width="2.2" height="2.2" fill="#64605e"/><circle cx="279.7" cy="83.1" r="0.8" fill="#d8d8d8" fill-opacity="0.8"/><rect x="279.8" y="78.5" width="10.8" height="10.8" rx="3.5" fill="#ff6800" filter="url(#bl)"/><rect x="282.6" y="81.3" width="5.2" height="5.2" fill="#64605e"/><circle cx="285.2" cy="83.9" r="2.2" fill="url(#pc)"/><rect x="245.4" y="87.3" width="10.8" height="10.8" rx="3.5" fill="#ff6800" filter="url(#bl)"/><rect x="248.2" y="90.1" width="5.2" height="5.2" fill="#64605e"/><circle cx="250.8" cy="92.7" r="2.2" fill="url(#pc)"/><rect x="230.9" y="91.2" width="17.8" height="17.8" rx="5.7" fill="#ff6800" filter="url(#bl)"/><rect x="233.7" y="94.0" width="12.2" height="12.2" fill="#64605e"/><circle cx="239.8" cy="100.1" r="5.1" fill="url(#pc)"/><rect x="247.6" y="100.2" width="10.8" height="10.8" rx="3.5" fill="#ff6800" filter="url(#bl)"/><rect x="250.4" y="103.0" width="5.2" height="5.2" fill="#64605e"/><circle cx="253.0" cy="105.6" r="2.2" fill="url(#pc)"/><circle cx="239.8" cy="110.6" r="2.5" fill="#e0661e" fill-opacity="0.5" filter="url(#bl2)"/><rect x="212.1" y="96.9" width="9.8" height="9.8" rx="3.1" fill="#ff6800" filter="url(#bl)"/><rect x="214.9" y="99.7" width="4.2" height="4.2" fill="#64605e"/><circle cx="217.0" cy="101.8" r="1.8" fill="url(#pc)"/><rect x="217.0" y="105.1" width="7.2" height="7.2" rx="3.0" fill="#ff6800" filter="url(#bl)"/><rect x="219.5" y="107.6" width="2.2" height="2.2" fill="#64605e"/><circle cx="220.6" cy="108.7" r="0.8" fill="#d8d8d8" fill-opacity="0.8"/><rect x="166.2" y="101.0" width="9.8" height="9.8" rx="3.1" fill="#ff6800" filter="url(#bl)"/><rect x="169.0" y="103.8" width="4.2" height="4.2" fill="#64605e"/><circle cx="171.1" cy="105.9" r="1.8" fill="url(#pc)"/><rect x="168.3" y="110.2" width="12.8" height="12.8" rx="4.1" fill="#ff6800" filter="url(#bl)"/><rect x="171.1" y="113.0" width="7.2" height="7.2" fill="#64605e"/><circle cx="174.7" cy="116.6" r="3.0" fill="url(#pc)"/><rect x="189.8" y="108.9" width="7.2" height="7.2" rx="3.0" fill="#ff6800" filter="url(#bl)"/><rect x="192.3" y="111.4" width="2.2" height="2.2" fill="#64605e"/><circle cx="193.4" cy="112.5" r="0.8" fill="#d8d8d8" fill-opacity="0.8"/><rect x="125.9" y="103.9" width="11.8" height="11.8" rx="3.8" fill="#ff6800" filter="url(#bl)"/><rect x="128.7" y="106.7" width="6.2" height="6.2" fill="#64605e"/><circle cx="131.8" cy="109.8" r="2.6" fill="url(#pc)"/><rect x="283.5" y="95.1" width="7.8" height="7.8" rx="2.5" fill="#ff6800" filter="url(#bl)"/><rect x="286.1" y="97.8" width="2.5" height="2.5" fill="#64605e"/><circle cx="287.4" cy="99.0" r="1.1" fill="url(#pc)"/><rect x="288.9" y="90.1" width="11.8" height="11.8" rx="3.8" fill="#ff6800" filter="url(#bl)"/><rect x="291.7" y="92.9" width="6.2" height="6.2" fill="#64605e"/><circle cx="294.8" cy="96.0" r="2.6" fill="url(#pc)"/><rect x="284.8" y="103.9" width="11.8" height="11.8" rx="3.8" fill="#ff6800" filter="url(#bl)"/><rect x="287.6" y="106.7" width="6.2" height="6.2" fill="#64605e"/><circle cx="290.7" cy="109.8" r="2.6" fill="url(#pc)"/><rect x="294.8" y="83.6" width="7.2" height="7.2" rx="3.0" fill="#ff6800" filter="url(#bl)"/><rect x="297.3" y="86.1" width="2.2" height="2.2" fill="#64605e"/><circle cx="298.4" cy="87.2" r="0.8" fill="#d8d8d8" fill-opacity="0.8"/><rect x="210.0" y="123.4" width="12.8" height="12.8" rx="4.1" fill="#ff6800" filter="url(#bl)"/><rect x="212.8" y="126.2" width="7.2" height="7.2" fill="#64605e"/><circle cx="216.4" cy="129.8" r="3.0" fill="url(#pc)"/><circle cx="196.4" cy="129.0" r="2.5" fill="#e0661e" fill-opacity="0.5" filter="url(#bl2)"/><rect x="237.6" y="120.7" width="7.2" height="7.2" rx="3.0" fill="#ff6800" filter="url(#bl)"/><rect x="240.1" y="123.2" width="2.2" height="2.2" fill="#64605e"/><circle cx="241.2" cy="124.3" r="0.8" fill="#d8d8d8" fill-opacity="0.8"/><rect x="232.7" y="128.0" width="9.8" height="9.8" rx="3.1" fill="#ff6800" filter="url(#bl)"/><rect x="235.5" y="130.8" width="4.2" height="4.2" fill="#64605e"/><circle cx="237.6" cy="132.9" r="1.8" fill="url(#pc)"/><rect x="237.0" y="134.5" width="7.2" height="7.2" rx="3.0" fill="#ff6800" filter="url(#bl)"/><rect x="239.5" y="137.0" width="2.2" height="2.2" fill="#64605e"/><circle cx="240.6" cy="138.1" r="0.8" fill="#d8d8d8" fill-opacity="0.8"/><rect x="240.3" y="135.8" width="6.2" height="6.2" rx="2.6" fill="#ff6800" filter="url(#bl)"/><rect x="242.3" y="137.8" width="2.2" height="2.2" fill="#64605e"/><circle cx="243.4" cy="138.9" r="0.8" fill="#d8d8d8" fill-opacity="0.8"/><rect x="250.8" y="129.8" width="7.2" height="7.2" rx="3.0" fill="#ff6800" filter="url(#bl)"/><rect x="253.3" y="132.3" width="2.2" height="2.2" fill="#64605e"/><circle cx="254.4" cy="133.4" r="0.8" fill="#d8d8d8" fill-opacity="0.8"/><rect x="262.8" y="128.7" width="6.2" height="6.2" rx="2.6" fill="#ff6800" filter="url(#bl)"/><rect x="264.8" y="130.7" width="2.2" height="2.2" fill="#64605e"/><circle cx="265.9" cy="131.8" r="0.8" fill="#d8d8d8" fill-opacity="0.8"/><rect x="270.5" y="124.8" width="6.2" height="6.2" rx="2.6" fill="#ff6800" filter="url(#bl)"/><rect x="272.5" y="126.8" width="2.2" height="2.2" fill="#64605e"/><circle cx="273.6" cy="127.9" r="0.8" fill="#d8d8d8" fill-opacity="0.8"/><rect x="266.8" y="133.5" width="10.8" height="10.8" rx="3.5" fill="#ff6800" filter="url(#bl)"/><rect x="269.6" y="136.3" width="5.2" height="5.2" fill="#64605e"/><circle cx="272.2" cy="138.9" r="2.2" fill="url(#pc)"/><circle cx="286.0" cy="134.0" r="2.5" fill="#e0661e" fill-opacity="0.5" filter="url(#bl2)"/><rect x="126.2" y="138.5" width="11.8" height="11.8" rx="3.8" fill="#ff6800" filter="url(#bl)"/><rect x="129.0" y="141.3" width="6.2" height="6.2" fill="#64605e"/><circle cx="132.1" cy="144.4" r="2.6" fill="url(#pc)"/><rect x="171.5" y="136.9" width="11.8" height="11.8" rx="3.8" fill="#ff6800" filter="url(#bl)"/><rect x="174.3" y="139.7" width="6.2" height="6.2" fill="#64605e"/><circle cx="177.4" cy="142.8" r="2.6" fill="url(#pc)"/><rect x="178.3" y="142.5" width="14.8" height="14.8" rx="4.7" fill="#ff6800" filter="url(#bl)"/><rect x="181.1" y="145.3" width="9.2" height="9.2" fill="#64605e"/><circle cx="185.7" cy="149.9" r="3.9" fill="url(#pc)"/><rect x="173.4" y="155.2" width="10.8" height="10.8" rx="3.5" fill="#ff6800" filter="url(#bl)"/><rect x="176.2" y="158.0" width="5.2" height="5.2" fill="#64605e"/><circle cx="178.8" cy="160.6" r="2.2" fill="url(#pc)"/><rect x="121.2" y="154.7" width="11.8" height="11.8" rx="3.8" fill="#ff6800" filter="url(#bl)"/><rect x="124.0" y="157.5" width="6.2" height="6.2" fill="#64605e"/><circle cx="127.1" cy="160.6" r="2.6" fill="url(#pc)"/><rect x="139.1" y="159.1" width="11.8" height="11.8" rx="3.8" fill="#ff6800" filter="url(#bl)"/><rect x="141.9" y="161.9" width="6.2" height="6.2" fill="#64605e"/><circle cx="145.0" cy="165.0" r="2.6" fill="url(#pc)"/><rect x="201.5" y="154.7" width="11.8" height="11.8" rx="3.8" fill="#ff6800" filter="url(#bl)"/><rect x="204.3" y="157.5" width="6.2" height="6.2" fill="#64605e"/><circle cx="207.4" cy="160.6" r="2.6" fill="url(#pc)"/><rect x="223.9" y="142.2" width="9.8" height="9.8" rx="3.1" fill="#ff6800" filter="url(#bl)"/><rect x="226.7" y="145.0" width="4.2" height="4.2" fill="#64605e"/><circle cx="228.8" cy="147.1" r="1.8" fill="url(#pc)"/><rect x="217.8" y="146.8" width="7.2" height="7.2" rx="3.0" fill="#ff6800" filter="url(#bl)"/><rect x="220.3" y="149.3" width="2.2" height="2.2" fill="#64605e"/><circle cx="221.4" cy="150.4" r="0.8" fill="#d8d8d8" fill-opacity="0.8"/><rect x="215.0" y="150.6" width="6.2" height="6.2" rx="2.6" fill="#ff6800" filter="url(#bl)"/><rect x="217.0" y="152.6" width="2.2" height="2.2" fill="#64605e"/><circle cx="218.1" cy="153.7" r="0.8" fill="#d8d8d8" fill-opacity="0.8"/><rect x="257.7" y="143.6" width="9.8" height="9.8" rx="3.1" fill="#ff6800" filter="url(#bl)"/><rect x="260.5" y="146.4" width="4.2" height="4.2" fill="#64605e"/><circle cx="262.6" cy="148.5" r="1.8" fill="url(#pc)"/><rect x="268.7" y="151.0" width="9.8" height="9.8" rx="3.1" fill="#ff6800" filter="url(#bl)"/><rect x="271.5" y="153.8" width="4.2" height="4.2" fill="#64605e"/><circle cx="273.6" cy="155.9" r="1.8" fill="url(#pc)"/><rect x="279.7" y="148.5" width="8.2" height="8.2" rx="3.4" fill="#ff6800" filter="url(#bl)"/><rect x="282.2" y="151.0" width="3.2" height="3.2" fill="#64605e"/><circle cx="283.8" cy="152.6" r="1.1" fill="#d8d8d8" fill-opacity="0.8"/><rect x="288.0" y="154.7" width="10.8" height="10.8" rx="3.5" fill="#ff6800" filter="url(#bl)"/><rect x="290.8" y="157.5" width="5.2" height="5.2" fill="#64605e"/><circle cx="293.4" cy="160.1" r="2.2" fill="url(#pc)"/><rect x="259.6" y="160.1" width="8.2" height="8.2" rx="3.4" fill="#ff6800" filter="url(#bl)"/><rect x="262.1" y="162.6" width="3.2" height="3.2" fill="#64605e"/><circle cx="263.7" cy="164.2" r="1.1" fill="#d8d8d8" fill-opacity="0.8"/><rect x="233.5" y="164.7" width="7.2" height="7.2" rx="3.0" fill="#ff6800" filter="url(#bl)"/><rect x="236.0" y="167.2" width="2.2" height="2.2" fill="#64605e"/><circle cx="237.1" cy="168.3" r="0.8" fill="#d8d8d8" fill-opacity="0.8"/><rect x="100.1" y="165.5" width="7.2" height="7.2" rx="3.0" fill="#ff6800" filter="url(#bl)"/><rect x="102.6" y="168.0" width="2.2" height="2.2" fill="#64605e"/><circle cx="103.7" cy="169.1" r="0.8" fill="#d8d8d8" fill-opacity="0.8"/><rect x="287.1" y="47.3" width="7.2" height="7.2" rx="3.0" fill="#ff6800" filter="url(#bl)"/><rect x="289.6" y="49.8" width="2.2" height="2.2" fill="#64605e"/><circle cx="290.7" cy="50.9" r="0.8" fill="#d8d8d8" fill-opacity="0.8"/><rect x="312.6" y="36.1" width="8.8" height="8.8" rx="2.8" fill="#ff6800" filter="url(#bl)"/><rect x="315.4" y="38.9" width="3.2" height="3.2" fill="#64605e"/><circle cx="317.0" cy="40.5" r="1.3" fill="url(#pc)"/><rect x="326.4" y="31.1" width="8.8" height="8.8" rx="2.8" fill="#ff6800" filter="url(#bl)"/><rect x="329.2" y="33.9" width="3.2" height="3.2" fill="#64605e"/><circle cx="330.8" cy="35.5" r="1.3" fill="url(#pc)"/><rect x="344.0" y="35.8" width="8.2" height="8.2" rx="3.4" fill="#ff6800" filter="url(#bl)"/><rect x="346.5" y="38.3" width="3.2" height="3.2" fill="#64605e"/><circle cx="348.1" cy="39.9" r="1.1" fill="#d8d8d8" fill-opacity="0.8"/><rect x="404.0" y="38.6" width="9.2" height="9.2" rx="3.9" fill="#ff6800" filter="url(#bl)"/><rect x="406.5" y="41.1" width="4.2" height="4.2" fill="#64605e"/><circle cx="408.6" cy="43.2" r="1.5" fill="#d8d8d8" fill-opacity="0.8"/><rect x="425.2" y="48.8" width="10.8" height="10.8" rx="3.5" fill="#ff6800" filter="url(#bl)"/><rect x="428.0" y="51.6" width="5.2" height="5.2" fill="#64605e"/><circle cx="430.6" cy="54.2" r="2.2" fill="url(#pc)"/><rect x="459.8" y="50.2" width="9.2" height="9.2" rx="3.9" fill="#ff6800" filter="url(#bl)"/><rect x="462.3" y="52.7" width="4.2" height="4.2" fill="#64605e"/><circle cx="464.4" cy="54.8" r="1.5" fill="#d8d8d8" fill-opacity="0.8"/><circle cx="476.5" cy="54.2" r="2.5" fill="#e0661e" fill-opacity="0.5" filter="url(#bl2)"/><rect x="491.6" y="43.8" width="7.2" height="7.2" rx="3.0" fill="#ff6800" filter="url(#bl)"/><rect x="494.1" y="46.3" width="2.2" height="2.2" fill="#64605e"/><circle cx="495.2" cy="47.4" r="0.8" fill="#d8d8d8" fill-opacity="0.8"/><rect x="500.7" y="45.2" width="9.8" height="9.8" rx="3.1" fill="#ff6800" filter="url(#bl)"/><rect x="503.5" y="48.0" width="4.2" height="4.2" fill="#64605e"/><circle cx="505.6" cy="50.1" r="1.8" fill="url(#pc)"/><rect x="307.4" y="57.5" width="7.2" height="7.2" rx="3.0" fill="#ff6800" filter="url(#bl)"/><rect x="309.9" y="60.0" width="2.2" height="2.2" fill="#64605e"/><circle cx="311.0" cy="61.1" r="0.8" fill="#d8d8d8" fill-opacity="0.8"/><rect x="335.0" y="58.1" width="9.8" height="9.8" rx="3.1" fill="#ff6800" filter="url(#bl)"/><rect x="337.8" y="60.9" width="4.2" height="4.2" fill="#64605e"/><circle cx="339.9" cy="63.0" r="1.8" fill="url(#pc)"/><rect x="354.1" y="54.8" width="7.2" height="7.2" rx="3.0" fill="#ff6800" filter="url(#bl)"/><rect x="356.6" y="57.3" width="2.2" height="2.2" fill="#64605e"/><circle cx="357.7" cy="58.4" r="0.8" fill="#d8d8d8" fill-opacity="0.8"/><rect x="321.8" y="65.3" width="9.8" height="9.8" rx="3.1" fill="#ff6800" filter="url(#bl)"/><rect x="324.6" y="68.1" width="4.2" height="4.2" fill="#64605e"/><circle cx="326.7" cy="70.2" r="1.8" fill="url(#pc)"/><rect x="315.7" y="68.0" width="9.8" height="9.8" rx="3.1" fill="#ff6800" filter="url(#bl)"/><rect x="318.5" y="70.8" width="4.2" height="4.2" fill="#64605e"/><circle cx="320.6" cy="72.9" r="1.8" fill="url(#pc)"/><rect x="312.1" y="76.0" width="8.8" height="8.8" rx="2.8" fill="#ff6800" filter="url(#bl)"/><rect x="314.9" y="78.8" width="3.2" height="3.2" fill="#64605e"/><circle cx="316.5" cy="80.4" r="1.3" fill="url(#pc)"/><rect x="313.5" y="85.0" width="8.8" height="8.8" rx="2.8" fill="#ff6800" filter="url(#bl)"/><rect x="316.3" y="87.8" width="3.2" height="3.2" fill="#64605e"/><circle cx="317.9" cy="89.4" r="1.3" fill="url(#pc)"/><rect x="337.7" y="74.6" width="9.8" height="9.8" rx="3.1" fill="#ff6800" filter="url(#bl)"/><rect x="340.5" y="77.4" width="4.2" height="4.2" fill="#64605e"/><circle cx="342.6" cy="79.5" r="1.8" fill="url(#pc)"/><rect x="358.9" y="76.8" width="9.8" height="9.8" rx="3.1" fill="#ff6800" filter="url(#bl)"/><rect x="361.7" y="79.6" width="4.2" height="4.2" fill="#64605e"/><circle cx="363.8" cy="81.7" r="1.8" fill="url(#pc)"/><rect x="367.3" y="72.9" width="13.8" height="13.8" rx="4.4" fill="#ff6800" filter="url(#bl)"/><rect x="370.1" y="75.7" width="8.2" height="8.2" fill="#64605e"/><circle cx="374.2" cy="79.8" r="3.4" fill="url(#pc)"/><rect x="382.1" y="80.8" width="11.8" height="11.8" rx="3.8" fill="#ff6800" filter="url(#bl)"/><rect x="384.9" y="83.6" width="6.2" height="6.2" fill="#64605e"/><circle cx="388.0" cy="86.7" r="2.6" fill="url(#pc)"/><circle cx="402.3" cy="84.5" r="2.5" fill="#e0661e" fill-opacity="0.5" filter="url(#bl2)"/><rect x="405.9" y="63.1" width="9.8" height="9.8" rx="3.1" fill="#ff6800" filter="url(#bl)"/><rect x="408.7" y="65.9" width="4.2" height="4.2" fill="#64605e"/><circle cx="410.8" cy="68.0" r="1.8" fill="url(#pc)"/><rect x="402.6" y="71.3" width="8.2" height="8.2" rx="3.4" fill="#ff6800" filter="url(#bl)"/><rect x="405.1" y="73.8" width="3.2" height="3.2" fill="#64605e"/><circle cx="406.7" cy="75.4" r="1.1" fill="#d8d8d8" fill-opacity="0.8"/><rect x="412.3" y="74.5" width="6.2" height="6.2" rx="2.6" fill="#ff6800" filter="url(#bl)"/><rect x="414.3" y="76.5" width="2.2" height="2.2" fill="#64605e"/><circle cx="415.4" cy="77.6" r="0.8" fill="#d8d8d8" fill-opacity="0.8"/><rect x="407.2" y="79.0" width="9.8" height="9.8" rx="3.1" fill="#ff6800" filter="url(#bl)"/><rect x="410.0" y="81.8" width="4.2" height="4.2" fill="#64605e"/><circle cx="412.1" cy="83.9" r="1.8" fill="url(#pc)"/><rect x="412.4" y="80.1" width="8.8" height="8.8" rx="2.8" fill="#ff6800" filter="url(#bl)"/><rect x="415.2" y="82.9" width="3.2" height="3.2" fill="#64605e"/><circle cx="416.8" cy="84.5" r="1.3" fill="url(#pc)"/><rect x="469.1" y="81.2" width="8.2" height="8.2" rx="3.4" fill="#ff6800" filter="url(#bl)"/><rect x="471.6" y="83.7" width="3.2" height="3.2" fill="#64605e"/><circle cx="473.2" cy="85.3" r="1.1" fill="#d8d8d8" fill-opacity="0.8"/><rect x="457.8" y="87.3" width="9.8" height="9.8" rx="3.1" fill="#ff6800" filter="url(#bl)"/><rect x="460.6" y="90.1" width="4.2" height="4.2" fill="#64605e"/><circle cx="462.7" cy="92.2" r="1.8" fill="url(#pc)"/><rect x="472.9" y="89.1" width="7.2" height="7.2" rx="3.0" fill="#ff6800" filter="url(#bl)"/><rect x="475.4" y="91.6" width="2.2" height="2.2" fill="#64605e"/><circle cx="476.5" cy="92.7" r="0.8" fill="#d8d8d8" fill-opacity="0.8"/><rect x="468.6" y="92.3" width="10.8" height="10.8" rx="3.5" fill="#ff6800" filter="url(#bl)"/><rect x="471.4" y="95.1" width="5.2" height="5.2" fill="#64605e"/><circle cx="474.0" cy="97.7" r="2.2" fill="url(#pc)"/><rect x="497.5" y="85.4" width="10.8" height="10.8" rx="3.5" fill="#ff6800" filter="url(#bl)"/><rect x="500.3" y="88.2" width="5.2" height="5.2" fill="#64605e"/><circle cx="502.9" cy="90.8" r="2.2" fill="url(#pc)"/><rect x="501.8" y="67.8" width="9.8" height="9.8" rx="3.1" fill="#ff6800" filter="url(#bl)"/><rect x="504.6" y="70.6" width="4.2" height="4.2" fill="#64605e"/><circle cx="506.7" cy="72.7" r="1.8" fill="url(#pc)"/><rect x="321.6" y="91.8" width="11.8" height="11.8" rx="3.8" fill="#ff6800" filter="url(#bl)"/><rect x="324.4" y="94.6" width="6.2" height="6.2" fill="#64605e"/><circle cx="327.5" cy="97.7" r="2.6" fill="url(#pc)"/><rect x="332.1" y="87.7" width="7.2" height="7.2" rx="3.0" fill="#ff6800" filter="url(#bl)"/><rect x="334.6" y="90.2" width="2.2" height="2.2" fill="#64605e"/><circle cx="335.7" cy="91.3" r="0.8" fill="#d8d8d8" fill-opacity="0.8"/><rect x="324.0" y="100.2" width="9.8" height="9.8" rx="3.1" fill="#ff6800" filter="url(#bl)"/><rect x="326.8" y="103.0" width="4.2" height="4.2" fill="#64605e"/><circle cx="328.9" cy="105.1" r="1.8" fill="url(#pc)"/><rect x="310.6" y="100.0" width="11.8" height="11.8" rx="3.8" fill="#ff6800" filter="url(#bl)"/><rect x="313.4" y="102.8" width="6.2" height="6.2" fill="#64605e"/><circle cx="316.5" cy="105.9" r="2.6" fill="url(#pc)"/><rect x="313.0" y="104.9" width="9.8" height="9.8" rx="3.1" fill="#ff6800" filter="url(#bl)"/><rect x="315.8" y="107.7" width="4.2" height="4.2" fill="#64605e"/><circle cx="317.9" cy="109.8" r="1.8" fill="url(#pc)"/><rect x="341.8" y="95.2" width="9.8" height="9.8" rx="3.1" fill="#ff6800" filter="url(#bl)"/><rect x="344.6" y="98.0" width="4.2" height="4.2" fill="#64605e"/><circle cx="346.7" cy="100.1" r="1.8" fill="url(#pc)"/><rect x="362.9" y="98.8" width="8.8" height="8.8" rx="2.8" fill="#ff6800" filter="url(#bl)"/><rect x="365.7" y="101.6" width="3.2" height="3.2" fill="#64605e"/><circle cx="367.3" cy="103.2" r="1.3" fill="url(#pc)"/><rect x="365.6" y="101.9" width="11.8" height="11.8" rx="3.8" fill="#ff6800" filter="url(#bl)"/><rect x="368.4" y="104.7" width="6.2" height="6.2" fill="#64605e"/><circle cx="371.5" cy="107.8" r="2.6" fill="url(#pc)"/><rect x="385.2" y="96.9" width="8.2" height="8.2" rx="3.4" fill="#ff6800" filter="url(#bl)"/><rect x="387.7" y="99.4" width="3.2" height="3.2" fill="#64605e"/><circle cx="389.3" cy="101.0" r="1.1" fill="#d8d8d8" fill-opacity="0.8"/><rect x="345.4" y="105.7" width="9.8" height="9.8" rx="3.1" fill="#ff6800" filter="url(#bl)"/><rect x="348.2" y="108.5" width="4.2" height="4.2" fill="#64605e"/><circle cx="350.3" cy="110.6" r="1.8" fill="url(#pc)"/><rect x="350.0" y="109.7" width="7.2" height="7.2" rx="3.0" fill="#ff6800" filter="url(#bl)"/><rect x="352.5" y="112.2" width="2.2" height="2.2" fill="#64605e"/><circle cx="353.6" cy="113.3" r="0.8" fill="#d8d8d8" fill-opacity="0.8"/><rect x="373.4" y="112.0" width="9.8" height="9.8" rx="3.1" fill="#ff6800" filter="url(#bl)"/><rect x="376.2" y="114.8" width="4.2" height="4.2" fill="#64605e"/><circle cx="378.3" cy="116.9" r="1.8" fill="url(#pc)"/><rect x="374.7" y="116.6" width="7.2" height="7.2" rx="3.0" fill="#ff6800" filter="url(#bl)"/><rect x="377.2" y="119.1" width="2.2" height="2.2" fill="#64605e"/><circle cx="378.3" cy="120.2" r="0.8" fill="#d8d8d8" fill-opacity="0.8"/><rect x="332.2" y="113.9" width="9.8" height="9.8" rx="3.1" fill="#ff6800" filter="url(#bl)"/><rect x="335.0" y="116.7" width="4.2" height="4.2" fill="#64605e"/><circle cx="337.1" cy="118.8" r="1.8" fill="url(#pc)"/><rect x="334.3" y="118.8" width="7.2" height="7.2" rx="3.0" fill="#ff6800" filter="url(#bl)"/><rect x="336.8" y="121.3" width="2.2" height="2.2" fill="#64605e"/><circle cx="337.9" cy="122.4" r="0.8" fill="#d8d8d8" fill-opacity="0.8"/><circle cx="346.2" cy="124.3" r="2.5" fill="#e0661e" fill-opacity="0.5" filter="url(#bl2)"/><rect x="366.5" y="120.7" width="7.2" height="7.2" rx="3.0" fill="#ff6800" filter="url(#bl)"/><rect x="369.0" y="123.2" width="2.2" height="2.2" fill="#64605e"/><circle cx="370.1" cy="124.3" r="0.8" fill="#d8d8d8" fill-opacity="0.8"/><rect x="419.7" y="102.4" width="10.8" height="10.8" rx="3.5" fill="#ff6800" filter="url(#bl)"/><rect x="422.5" y="105.2" width="5.2" height="5.2" fill="#64605e"/><circle cx="425.1" cy="107.8" r="2.2" fill="url(#pc)"/><rect x="426.5" y="100.2" width="9.8" height="9.8" rx="3.1" fill="#ff6800" filter="url(#bl)"/><rect x="429.3" y="103.0" width="4.2" height="4.2" fill="#64605e"/><circle cx="431.4" cy="105.1" r="1.8" fill="url(#pc)"/><rect x="429.2" y="109.2" width="8.2" height="8.2" rx="3.4" fill="#ff6800" filter="url(#bl)"/><rect x="431.7" y="111.7" width="3.2" height="3.2" fill="#64605e"/><circle cx="433.3" cy="113.3" r="1.1" fill="#d8d8d8" fill-opacity="0.8"/><rect x="412.7" y="109.8" width="9.8" height="9.8" rx="3.1" fill="#ff6800" filter="url(#bl)"/><rect x="415.5" y="112.6" width="4.2" height="4.2" fill="#64605e"/><circle cx="417.6" cy="114.7" r="1.8" fill="url(#pc)"/><rect x="422.9" y="114.7" width="8.2" height="8.2" rx="3.4" fill="#ff6800" filter="url(#bl)"/><rect x="425.4" y="117.2" width="3.2" height="3.2" fill="#64605e"/><circle cx="427.0" cy="118.8" r="1.1" fill="#d8d8d8" fill-opacity="0.8"/><rect x="439.8" y="96.4" width="11.8" height="11.8" rx="3.8" fill="#ff6800" filter="url(#bl)"/><rect x="442.6" y="99.2" width="6.2" height="6.2" fill="#64605e"/><circle cx="445.7" cy="102.3" r="2.6" fill="url(#pc)"/><rect x="466.3" y="105.9" width="8.2" height="8.2" rx="3.4" fill="#ff6800" filter="url(#bl)"/><rect x="468.8" y="108.4" width="3.2" height="3.2" fill="#64605e"/><circle cx="470.4" cy="110.0" r="1.1" fill="#d8d8d8" fill-opacity="0.8"/><rect x="481.9" y="112.4" width="12.8" height="12.8" rx="4.1" fill="#ff6800" filter="url(#bl)"/><rect x="484.7" y="115.2" width="7.2" height="7.2" fill="#64605e"/><circle cx="488.3" cy="118.8" r="3.0" fill="url(#pc)"/><rect x="500.8" y="111.6" width="11.8" height="11.8" rx="3.8" fill="#ff6800" filter="url(#bl)"/><rect x="503.6" y="114.4" width="6.2" height="6.2" fill="#64605e"/><circle cx="506.7" cy="117.5" r="2.6" fill="url(#pc)"/><rect x="309.1" y="123.8" width="8.2" height="8.2" rx="3.4" fill="#ff6800" filter="url(#bl)"/><rect x="311.6" y="126.3" width="3.2" height="3.2" fill="#64605e"/><circle cx="313.2" cy="127.9" r="1.1" fill="#d8d8d8" fill-opacity="0.8"/><rect x="317.1" y="129.1" width="9.8" height="9.8" rx="3.1" fill="#ff6800" filter="url(#bl)"/><rect x="319.9" y="131.9" width="4.2" height="4.2" fill="#64605e"/><circle cx="322.0" cy="134.0" r="1.8" fill="url(#pc)"/><rect x="321.1" y="128.1" width="12.8" height="12.8" rx="4.1" fill="#ff6800" filter="url(#bl)"/><rect x="323.9" y="130.9" width="7.2" height="7.2" fill="#64605e"/><circle cx="327.5" cy="134.5" r="3.0" fill="url(#pc)"/><rect x="337.2" y="126.4" width="10.8" height="10.8" rx="3.5" fill="#ff6800" filter="url(#bl)"/><rect x="340.0" y="129.2" width="5.2" height="5.2" fill="#64605e"/><circle cx="342.6" cy="131.8" r="2.2" fill="url(#pc)"/><rect x="345.5" y="134.1" width="10.8" height="10.8" rx="3.5" fill="#ff6800" filter="url(#bl)"/><rect x="348.3" y="136.9" width="5.2" height="5.2" fill="#64605e"/><circle cx="350.9" cy="139.5" r="2.2" fill="url(#pc)"/><rect x="330.8" y="135.9" width="9.8" height="9.8" rx="3.1" fill="#ff6800" filter="url(#bl)"/><rect x="333.6" y="138.7" width="4.2" height="4.2" fill="#64605e"/><circle cx="335.7" cy="140.8" r="1.8" fill="url(#pc)"/><rect x="333.1" y="140.4" width="11.8" height="11.8" rx="3.8" fill="#ff6800" filter="url(#bl)"/><rect x="335.9" y="143.2" width="6.2" height="6.2" fill="#64605e"/><circle cx="339.0" cy="146.3" r="2.6" fill="url(#pc)"/><rect x="329.4" y="144.1" width="7.2" height="7.2" rx="3.0" fill="#ff6800" filter="url(#bl)"/><rect x="331.9" y="146.6" width="2.2" height="2.2" fill="#64605e"/><circle cx="333.0" cy="147.7" r="0.8" fill="#d8d8d8" fill-opacity="0.8"/><circle cx="317.3" cy="147.1" r="2.5" fill="#e0661e" fill-opacity="0.5" filter="url(#bl2)"/><rect x="347.3" y="145.5" width="9.8" height="9.8" rx="3.1" fill="#ff6800" filter="url(#bl)"/><rect x="350.1" y="148.3" width="4.2" height="4.2" fill="#64605e"/><circle cx="352.2" cy="150.4" r="1.8" fill="url(#pc)"/><rect x="349.5" y="152.3" width="7.2" height="7.2" rx="3.0" fill="#ff6800" filter="url(#bl)"/><rect x="352.0" y="154.8" width="2.2" height="2.2" fill="#64605e"/><circle cx="353.1" cy="155.9" r="0.8" fill="#d8d8d8" fill-opacity="0.8"/><rect x="357.4" y="135.9" width="7.2" height="7.2" rx="3.0" fill="#ff6800" filter="url(#bl)"/><rect x="359.9" y="138.4" width="2.2" height="2.2" fill="#64605e"/><circle cx="361.0" cy="139.5" r="0.8" fill="#d8d8d8" fill-opacity="0.8"/><rect x="363.4" y="133.6" width="11.8" height="11.8" rx="3.8" fill="#ff6800" filter="url(#bl)"/><rect x="366.2" y="136.4" width="6.2" height="6.2" fill="#64605e"/><circle cx="369.3" cy="139.5" r="2.6" fill="url(#pc)"/><rect x="379.7" y="134.8" width="8.2" height="8.2" rx="3.4" fill="#ff6800" filter="url(#bl)"/><rect x="382.2" y="137.3" width="3.2" height="3.2" fill="#64605e"/><circle cx="383.8" cy="138.9" r="1.1" fill="#d8d8d8" fill-opacity="0.8"/><rect x="388.9" y="135.8" width="11.8" height="11.8" rx="3.8" fill="#ff6800" filter="url(#bl)"/><rect x="391.7" y="138.6" width="6.2" height="6.2" fill="#64605e"/><circle cx="394.8" cy="141.7" r="2.6" fill="url(#pc)"/><rect x="396.7" y="129.8" width="7.2" height="7.2" rx="3.0" fill="#ff6800" filter="url(#bl)"/><rect x="399.2" y="132.3" width="2.2" height="2.2" fill="#64605e"/><circle cx="400.3" cy="133.4" r="0.8" fill="#d8d8d8" fill-opacity="0.8"/><rect x="400.3" y="134.5" width="7.2" height="7.2" rx="3.0" fill="#ff6800" filter="url(#bl)"/><rect x="402.8" y="137.0" width="2.2" height="2.2" fill="#64605e"/><circle cx="403.9" cy="138.1" r="0.8" fill="#d8d8d8" fill-opacity="0.8"/><rect x="411.3" y="124.4" width="14.8" height="14.8" rx="4.7" fill="#ff6800" filter="url(#bl)"/><rect x="414.1" y="127.2" width="9.2" height="9.2" fill="#64605e"/><circle cx="418.7" cy="131.8" r="3.9" fill="url(#pc)"/><rect x="409.1" y="134.0" width="8.2" height="8.2" rx="3.4" fill="#ff6800" filter="url(#bl)"/><rect x="411.6" y="136.5" width="3.2" height="3.2" fill="#64605e"/><circle cx="413.2" cy="138.1" r="1.1" fill="#d8d8d8" fill-opacity="0.8"/><rect x="421.8" y="141.7" width="9.2" height="9.2" rx="3.9" fill="#ff6800" filter="url(#bl)"/><rect x="424.3" y="144.2" width="4.2" height="4.2" fill="#64605e"/><circle cx="426.4" cy="146.3" r="1.5" fill="#d8d8d8" fill-opacity="0.8"/><rect x="439.7" y="145.0" width="8.2" height="8.2" rx="3.4" fill="#ff6800" filter="url(#bl)"/><rect x="442.2" y="147.5" width="3.2" height="3.2" fill="#64605e"/><circle cx="443.8" cy="149.1" r="1.1" fill="#d8d8d8" fill-opacity="0.8"/><rect x="453.1" y="128.2" width="7.2" height="7.2" rx="3.0" fill="#ff6800" filter="url(#bl)"/><rect x="455.6" y="130.7" width="2.2" height="2.2" fill="#64605e"/><circle cx="456.7" cy="131.8" r="0.8" fill="#d8d8d8" fill-opacity="0.8"/><circle cx="462.2" cy="137.3" r="2.5" fill="#e0661e" fill-opacity="0.5" filter="url(#bl2)"/><rect x="475.4" y="128.8" width="9.2" height="9.2" rx="3.9" fill="#ff6800" filter="url(#bl)"/><rect x="477.9" y="131.3" width="4.2" height="4.2" fill="#64605e"/><circle cx="480.0" cy="133.4" r="1.5" fill="#d8d8d8" fill-opacity="0.8"/><rect x="481.4" y="137.2" width="7.2" height="7.2" rx="3.0" fill="#ff6800" filter="url(#bl)"/><rect x="483.9" y="139.7" width="2.2" height="2.2" fill="#64605e"/><circle cx="485.0" cy="140.8" r="0.8" fill="#d8d8d8" fill-opacity="0.8"/><rect x="493.4" y="137.7" width="11.8" height="11.8" rx="3.8" fill="#ff6800" filter="url(#bl)"/><rect x="496.2" y="140.5" width="6.2" height="6.2" fill="#64605e"/><circle cx="499.3" cy="143.6" r="2.6" fill="url(#pc)"/><rect x="432.8" y="153.8" width="8.2" height="8.2" rx="3.4" fill="#ff6800" filter="url(#bl)"/><rect x="435.3" y="156.3" width="3.2" height="3.2" fill="#64605e"/><circle cx="436.9" cy="157.9" r="1.1" fill="#d8d8d8" fill-opacity="0.8"/><rect x="449.0" y="153.8" width="8.2" height="8.2" rx="3.4" fill="#ff6800" filter="url(#bl)"/><rect x="451.5" y="156.3" width="3.2" height="3.2" fill="#64605e"/><circle cx="453.1" cy="157.9" r="1.1" fill="#d8d8d8" fill-opacity="0.8"/><rect x="377.8" y="153.8" width="8.2" height="8.2" rx="3.4" fill="#ff6800" filter="url(#bl)"/><rect x="380.3" y="156.3" width="3.2" height="3.2" fill="#64605e"/><circle cx="381.9" cy="157.9" r="1.1" fill="#d8d8d8" fill-opacity="0.8"/><rect x="383.8" y="157.8" width="7.2" height="7.2" rx="3.0" fill="#ff6800" filter="url(#bl)"/><rect x="386.3" y="160.3" width="2.2" height="2.2" fill="#64605e"/><circle cx="387.4" cy="161.4" r="0.8" fill="#d8d8d8" fill-opacity="0.8"/><circle cx="395.7" cy="158.7" r="2.5" fill="#e0661e" fill-opacity="0.5" filter="url(#bl2)"/><rect x="334.4" y="160.1" width="8.2" height="8.2" rx="3.4" fill="#ff6800" filter="url(#bl)"/><rect x="336.9" y="162.6" width="3.2" height="3.2" fill="#64605e"/><circle cx="338.5" cy="164.2" r="1.1" fill="#d8d8d8" fill-opacity="0.8"/><rect x="319.3" y="160.6" width="8.2" height="8.2" rx="3.4" fill="#ff6800" filter="url(#bl)"/><rect x="321.8" y="163.1" width="3.2" height="3.2" fill="#64605e"/><circle cx="323.4" cy="164.7" r="1.1" fill="#d8d8d8" fill-opacity="0.8"/><rect x="301.9" y="159.5" width="8.2" height="8.2" rx="3.4" fill="#ff6800" filter="url(#bl)"/><rect x="304.4" y="162.0" width="3.2" height="3.2" fill="#64605e"/><circle cx="306.0" cy="163.6" r="1.1" fill="#d8d8d8" fill-opacity="0.8"/><rect x="418.2" y="158.7" width="13.8" height="13.8" rx="4.4" fill="#ff6800" filter="url(#bl)"/><rect x="421.0" y="161.5" width="8.2" height="8.2" fill="#64605e"/><circle cx="425.1" cy="165.6" r="3.4" fill="url(#pc)"/><rect x="470.9" y="163.3" width="7.2" height="7.2" rx="3.0" fill="#ff6800" filter="url(#bl)"/><rect x="473.4" y="165.8" width="2.2" height="2.2" fill="#64605e"/><circle cx="474.5" cy="166.9" r="0.8" fill="#d8d8d8" fill-opacity="0.8"/><rect x="532.9" y="70.0" width="10.8" height="10.8" rx="3.5" fill="#ff6800" filter="url(#bl)"/><rect x="535.7" y="72.8" width="5.2" height="5.2" fill="#64605e"/><circle cx="538.3" cy="75.4" r="2.2" fill="url(#pc)"/><rect x="516.9" y="76.0" width="9.8" height="9.8" rx="3.1" fill="#ff6800" filter="url(#bl)"/><rect x="519.7" y="78.8" width="4.2" height="4.2" fill="#64605e"/><circle cx="521.8" cy="80.9" r="1.8" fill="url(#pc)"/><rect x="560.9" y="68.3" width="9.2" height="9.2" rx="3.9" fill="#ff6800" filter="url(#bl)"/><rect x="563.4" y="70.8" width="4.2" height="4.2" fill="#64605e"/><circle cx="565.5" cy="72.9" r="1.5" fill="#d8d8d8" fill-opacity="0.8"/><rect x="531.6" y="92.9" width="11.8" height="11.8" rx="3.8" fill="#ff6800" filter="url(#bl)"/><rect x="534.4" y="95.7" width="6.2" height="6.2" fill="#64605e"/><circle cx="537.5" cy="98.8" r="2.6" fill="url(#pc)"/><rect x="533.9" y="98.7" width="7.2" height="7.2" rx="3.0" fill="#ff6800" filter="url(#bl)"/><rect x="536.4" y="101.2" width="2.2" height="2.2" fill="#64605e"/><circle cx="537.5" cy="102.3" r="0.8" fill="#d8d8d8" fill-opacity="0.8"/><rect x="509.7" y="132.3" width="8.8" height="8.8" rx="2.8" fill="#ff6800" filter="url(#bl)"/><rect x="512.5" y="135.1" width="3.2" height="3.2" fill="#64605e"/><circle cx="514.1" cy="136.7" r="1.3" fill="url(#pc)"/><rect x="536.1" y="136.7" width="8.2" height="8.2" rx="3.4" fill="#ff6800" filter="url(#bl)"/><rect x="538.6" y="139.2" width="3.2" height="3.2" fill="#64605e"/><circle cx="540.2" cy="140.8" r="1.1" fill="#d8d8d8" fill-opacity="0.8"/><rect x="523.9" y="152.0" width="11.8" height="11.8" rx="3.8" fill="#ff6800" filter="url(#bl)"/><rect x="526.7" y="154.8" width="6.2" height="6.2" fill="#64605e"/><circle cx="529.8" cy="157.9" r="2.6" fill="url(#pc)"/><rect x="516.3" y="164.2" width="8.2" height="8.2" rx="3.4" fill="#ff6800" filter="url(#bl)"/><rect x="518.8" y="166.7" width="3.2" height="3.2" fill="#64605e"/><circle cx="520.4" cy="168.3" r="1.1" fill="#d8d8d8" fill-opacity="0.8"/><rect x="572.2" y="163.7" width="9.2" height="9.2" rx="3.9" fill="#ff6800" filter="url(#bl)"/><rect x="574.7" y="166.2" width="4.2" height="4.2" fill="#64605e"/><circle cx="576.8" cy="168.3" r="1.5" fill="#d8d8d8" fill-opacity="0.8"/><rect x="146.1" y="175.2" width="9.8" height="9.8" rx="3.1" fill="#ff6800" filter="url(#bl)"/><rect x="148.9" y="178.0" width="4.2" height="4.2" fill="#64605e"/><circle cx="151.0" cy="180.1" r="1.8" fill="url(#pc)"/><rect x="154.6" y="177.4" width="8.2" height="8.2" rx="3.4" fill="#ff6800" filter="url(#bl)"/><rect x="157.1" y="179.9" width="3.2" height="3.2" fill="#64605e"/><circle cx="158.7" cy="181.5" r="1.1" fill="#d8d8d8" fill-opacity="0.8"/><rect x="163.4" y="168.3" width="9.8" height="9.8" rx="3.1" fill="#ff6800" filter="url(#bl)"/><rect x="166.2" y="171.1" width="4.2" height="4.2" fill="#64605e"/><circle cx="168.3" cy="173.2" r="1.8" fill="url(#pc)"/><rect x="168.0" y="171.8" width="7.2" height="7.2" rx="3.0" fill="#ff6800" filter="url(#bl)"/><rect x="170.5" y="174.3" width="2.2" height="2.2" fill="#64605e"/><circle cx="171.6" cy="175.4" r="0.8" fill="#d8d8d8" fill-opacity="0.8"/><rect x="193.5" y="171.5" width="11.8" height="11.8" rx="3.8" fill="#ff6800" filter="url(#bl)"/><rect x="196.3" y="174.3" width="6.2" height="6.2" fill="#64605e"/><circle cx="199.4" cy="177.4" r="2.6" fill="url(#pc)"/><rect x="202.2" y="178.8" width="10.8" height="10.8" rx="3.5" fill="#ff6800" filter="url(#bl)"/><rect x="205.0" y="181.6" width="5.2" height="5.2" fill="#64605e"/><circle cx="207.6" cy="184.2" r="2.2" fill="url(#pc)"/><rect x="184.9" y="183.5" width="9.8" height="9.8" rx="3.1" fill="#ff6800" filter="url(#bl)"/><rect x="187.7" y="186.3" width="4.2" height="4.2" fill="#64605e"/><circle cx="189.8" cy="188.4" r="1.8" fill="url(#pc)"/><rect x="195.3" y="190.3" width="7.2" height="7.2" rx="3.0" fill="#ff6800" filter="url(#bl)"/><rect x="197.8" y="192.8" width="2.2" height="2.2" fill="#64605e"/><circle cx="198.9" cy="193.9" r="0.8" fill="#d8d8d8" fill-opacity="0.8"/><rect x="172.5" y="193.9" width="8.2" height="8.2" rx="3.4" fill="#ff6800" filter="url(#bl)"/><rect x="175.0" y="196.4" width="3.2" height="3.2" fill="#64605e"/><circle cx="176.6" cy="198.0" r="1.1" fill="#d8d8d8" fill-opacity="0.8"/><rect x="216.5" y="176.8" width="8.2" height="8.2" rx="3.4" fill="#ff6800" filter="url(#bl)"/><rect x="219.0" y="179.3" width="3.2" height="3.2" fill="#64605e"/><circle cx="220.6" cy="180.9" r="1.1" fill="#d8d8d8" fill-opacity="0.8"/><rect x="220.3" y="183.5" width="9.8" height="9.8" rx="3.1" fill="#ff6800" filter="url(#bl)"/><rect x="223.1" y="186.3" width="4.2" height="4.2" fill="#64605e"/><circle cx="225.2" cy="188.4" r="1.8" fill="url(#pc)"/><rect x="225.8" y="187.3" width="8.8" height="8.8" rx="2.8" fill="#ff6800" filter="url(#bl)"/><rect x="228.6" y="190.1" width="3.2" height="3.2" fill="#64605e"/><circle cx="230.2" cy="191.7" r="1.3" fill="url(#pc)"/><rect x="233.5" y="184.0" width="8.8" height="8.8" rx="2.8" fill="#ff6800" filter="url(#bl)"/><rect x="236.3" y="186.8" width="3.2" height="3.2" fill="#64605e"/><circle cx="237.9" cy="188.4" r="1.3" fill="url(#pc)"/><rect x="234.6" y="190.3" width="8.8" height="8.8" rx="2.8" fill="#ff6800" filter="url(#bl)"/><rect x="237.4" y="193.1" width="3.2" height="3.2" fill="#64605e"/><circle cx="239.0" cy="194.7" r="1.3" fill="url(#pc)"/><rect x="251.3" y="176.5" width="7.2" height="7.2" rx="3.0" fill="#ff6800" filter="url(#bl)"/><rect x="253.8" y="179.0" width="2.2" height="2.2" fill="#64605e"/><circle cx="254.9" cy="180.1" r="0.8" fill="#d8d8d8" fill-opacity="0.8"/><rect x="252.7" y="180.1" width="7.2" height="7.2" rx="3.0" fill="#ff6800" filter="url(#bl)"/><rect x="255.2" y="182.6" width="2.2" height="2.2" fill="#64605e"/><circle cx="256.3" cy="183.7" r="0.8" fill="#d8d8d8" fill-opacity="0.8"/><rect x="265.1" y="179.9" width="9.8" height="9.8" rx="3.1" fill="#ff6800" filter="url(#bl)"/><rect x="267.9" y="182.7" width="4.2" height="4.2" fill="#64605e"/><circle cx="270.0" cy="184.8" r="1.8" fill="url(#pc)"/><rect x="278.9" y="186.8" width="9.8" height="9.8" rx="3.1" fill="#ff6800" filter="url(#bl)"/><rect x="281.7" y="189.6" width="4.2" height="4.2" fill="#64605e"/><circle cx="283.8" cy="191.7" r="1.8" fill="url(#pc)"/><rect x="285.3" y="174.7" width="10.8" height="10.8" rx="3.5" fill="#ff6800" filter="url(#bl)"/><rect x="288.1" y="177.5" width="5.2" height="5.2" fill="#64605e"/><circle cx="290.7" cy="180.1" r="2.2" fill="url(#pc)"/><rect x="289.9" y="176.6" width="9.8" height="9.8" rx="3.1" fill="#ff6800" filter="url(#bl)"/><rect x="292.7" y="179.4" width="4.2" height="4.2" fill="#64605e"/><circle cx="294.8" cy="181.5" r="1.8" fill="url(#pc)"/><rect x="236.2" y="197.1" width="12.8" height="12.8" rx="4.1" fill="#ff6800" filter="url(#bl)"/><rect x="239.0" y="199.9" width="7.2" height="7.2" fill="#64605e"/><circle cx="242.6" cy="203.5" r="3.0" fill="url(#pc)"/><rect x="239.9" y="206.3" width="9.8" height="9.8" rx="3.1" fill="#ff6800" filter="url(#bl)"/><rect x="242.7" y="209.1" width="4.2" height="4.2" fill="#64605e"/><circle cx="244.8" cy="211.2" r="1.8" fill="url(#pc)"/><rect x="220.3" y="199.1" width="9.8" height="9.8" rx="3.1" fill="#ff6800" filter="url(#bl)"/><rect x="223.1" y="201.9" width="4.2" height="4.2" fill="#64605e"/><circle cx="225.2" cy="204.0" r="1.8" fill="url(#pc)"/><rect x="220.5" y="209.5" width="7.2" height="7.2" rx="3.0" fill="#ff6800" filter="url(#bl)"/><rect x="223.0" y="212.0" width="2.2" height="2.2" fill="#64605e"/><circle cx="224.1" cy="213.1" r="0.8" fill="#d8d8d8" fill-opacity="0.8"/><circle cx="210.4" cy="208.4" r="2.5" fill="#e0661e" fill-opacity="0.5" filter="url(#bl2)"/><rect x="194.9" y="203.9" width="11.8" height="11.8" rx="3.8" fill="#ff6800" filter="url(#bl)"/><rect x="197.7" y="206.7" width="6.2" height="6.2" fill="#64605e"/><circle cx="200.8" cy="209.8" r="2.6" fill="url(#pc)"/><rect x="264.7" y="194.0" width="17.8" height="17.8" rx="5.7" fill="#ff6800" filter="url(#bl)"/><rect x="267.5" y="196.8" width="12.2" height="12.2" fill="#64605e"/><circle cx="273.6" cy="202.9" r="5.1" fill="url(#pc)"/><rect x="259.0" y="197.7" width="7.2" height="7.2" rx="3.0" fill="#ff6800" filter="url(#bl)"/><rect x="261.5" y="200.2" width="2.2" height="2.2" fill="#64605e"/><circle cx="262.6" cy="201.3" r="0.8" fill="#d8d8d8" fill-opacity="0.8"/><rect x="263.8" y="212.3" width="9.8" height="9.8" rx="3.1" fill="#ff6800" filter="url(#bl)"/><rect x="266.6" y="215.1" width="4.2" height="4.2" fill="#64605e"/><circle cx="268.7" cy="217.2" r="1.8" fill="url(#pc)"/><rect x="267.9" y="214.3" width="9.8" height="9.8" rx="3.1" fill="#ff6800" filter="url(#bl)"/><rect x="270.7" y="217.1" width="4.2" height="4.2" fill="#64605e"/><circle cx="272.8" cy="219.2" r="1.8" fill="url(#pc)"/><rect x="292.5" y="197.1" width="12.8" height="12.8" rx="4.1" fill="#ff6800" filter="url(#bl)"/><rect x="295.3" y="199.9" width="7.2" height="7.2" fill="#64605e"/><circle cx="298.9" cy="203.5" r="3.0" fill="url(#pc)"/><circle cx="101.5" cy="208.4" r="2.5" fill="#e0661e" fill-opacity="0.5" filter="url(#bl2)"/><rect x="115.5" y="204.0" width="7.2" height="7.2" rx="3.0" fill="#ff6800" filter="url(#bl)"/><rect x="118.0" y="206.5" width="2.2" height="2.2" fill="#64605e"/><circle cx="119.1" cy="207.6" r="0.8" fill="#d8d8d8" fill-opacity="0.8"/><rect x="154.6" y="222.7" width="8.2" height="8.2" rx="3.4" fill="#ff6800" filter="url(#bl)"/><rect x="157.1" y="225.2" width="3.2" height="3.2" fill="#64605e"/><circle cx="158.7" cy="226.8" r="1.1" fill="#d8d8d8" fill-opacity="0.8"/><rect x="169.5" y="221.4" width="9.8" height="9.8" rx="3.1" fill="#ff6800" filter="url(#bl)"/><rect x="172.3" y="224.2" width="4.2" height="4.2" fill="#64605e"/><circle cx="174.4" cy="226.3" r="1.8" fill="url(#pc)"/><rect x="192.2" y="222.4" width="12.8" height="12.8" rx="4.1" fill="#ff6800" filter="url(#bl)"/><rect x="195.0" y="225.2" width="7.2" height="7.2" fill="#64605e"/><circle cx="198.6" cy="228.8" r="3.0" fill="url(#pc)"/><rect x="217.0" y="222.8" width="9.8" height="9.8" rx="3.1" fill="#ff6800" filter="url(#bl)"/><rect x="219.8" y="225.6" width="4.2" height="4.2" fill="#64605e"/><circle cx="221.9" cy="227.7" r="1.8" fill="url(#pc)"/><rect x="214.2" y="225.4" width="7.2" height="7.2" rx="3.0" fill="#ff6800" filter="url(#bl)"/><rect x="216.7" y="227.9" width="2.2" height="2.2" fill="#64605e"/><circle cx="217.8" cy="229.0" r="0.8" fill="#d8d8d8" fill-opacity="0.8"/><circle cx="219.2" cy="236.5" r="2.5" fill="#e0661e" fill-opacity="0.5" filter="url(#bl2)"/><circle cx="206.8" cy="234.3" r="2.5" fill="#e0661e" fill-opacity="0.5" filter="url(#bl2)"/><rect x="198.5" y="235.1" width="7.2" height="7.2" rx="3.0" fill="#ff6800" filter="url(#bl)"/><rect x="201.0" y="237.6" width="2.2" height="2.2" fill="#64605e"/><circle cx="202.1" cy="238.7" r="0.8" fill="#d8d8d8" fill-opacity="0.8"/><rect x="179.9" y="236.2" width="7.2" height="7.2" rx="3.0" fill="#ff6800" filter="url(#bl)"/><rect x="182.4" y="238.7" width="2.2" height="2.2" fill="#64605e"/><circle cx="183.5" cy="239.8" r="0.8" fill="#d8d8d8" fill-opacity="0.8"/><circle cx="210.4" cy="243.3" r="2.5" fill="#e0661e" fill-opacity="0.5" filter="url(#bl2)"/><rect x="238.5" y="226.9" width="9.8" height="9.8" rx="3.1" fill="#ff6800" filter="url(#bl)"/><rect x="241.3" y="229.7" width="4.2" height="4.2" fill="#64605e"/><circle cx="243.4" cy="231.8" r="1.8" fill="url(#pc)"/><rect x="243.1" y="227.4" width="7.2" height="7.2" rx="3.0" fill="#ff6800" filter="url(#bl)"/><rect x="245.6" y="229.9" width="2.2" height="2.2" fill="#64605e"/><circle cx="246.7" cy="231.0" r="0.8" fill="#d8d8d8" fill-opacity="0.8"/><rect x="255.8" y="228.2" width="8.2" height="8.2" rx="3.4" fill="#ff6800" filter="url(#bl)"/><rect x="258.3" y="230.7" width="3.2" height="3.2" fill="#64605e"/><circle cx="259.9" cy="232.3" r="1.1" fill="#d8d8d8" fill-opacity="0.8"/><circle cx="293.4" cy="233.2" r="2.5" fill="#e0661e" fill-opacity="0.5" filter="url(#bl2)"/><rect x="287.9" y="235.1" width="8.2" height="8.2" rx="3.4" fill="#ff6800" filter="url(#bl)"/><rect x="290.4" y="237.6" width="3.2" height="3.2" fill="#64605e"/><circle cx="292.0" cy="239.2" r="1.1" fill="#d8d8d8" fill-opacity="0.8"/><circle cx="284.6" cy="234.5" r="2.5" fill="#e0661e" fill-opacity="0.5" filter="url(#bl2)"/><rect x="248.9" y="237.9" width="8.2" height="8.2" rx="3.4" fill="#ff6800" filter="url(#bl)"/><rect x="251.4" y="240.4" width="3.2" height="3.2" fill="#64605e"/><circle cx="253.0" cy="242.0" r="1.1" fill="#d8d8d8" fill-opacity="0.8"/><rect x="256.1" y="238.5" width="16.8" height="16.8" rx="5.4" fill="#ff6800" filter="url(#bl)"/><rect x="258.9" y="241.3" width="11.2" height="11.2" fill="#64605e"/><circle cx="264.5" cy="246.9" r="4.7" fill="url(#pc)"/><rect x="270.0" y="238.4" width="7.2" height="7.2" rx="3.0" fill="#ff6800" filter="url(#bl)"/><rect x="272.5" y="240.9" width="2.2" height="2.2" fill="#64605e"/><circle cx="273.6" cy="242.0" r="0.8" fill="#d8d8d8" fill-opacity="0.8"/><circle cx="234.3" cy="250.2" r="2.5" fill="#e0661e" fill-opacity="0.5" filter="url(#bl2)"/><rect x="158.4" y="248.5" width="12.8" height="12.8" rx="4.1" fill="#ff6800" filter="url(#bl)"/><rect x="161.2" y="251.3" width="7.2" height="7.2" fill="#64605e"/><circle cx="164.8" cy="254.9" r="3.0" fill="url(#pc)"/><rect x="177.4" y="250.8" width="8.2" height="8.2" rx="3.4" fill="#ff6800" filter="url(#bl)"/><rect x="179.9" y="253.3" width="3.2" height="3.2" fill="#64605e"/><circle cx="181.5" cy="254.9" r="1.1" fill="#d8d8d8" fill-opacity="0.8"/><circle cx="176.0" cy="263.1" r="2.5" fill="#e0661e" fill-opacity="0.5" filter="url(#bl2)"/><rect x="205.5" y="253.0" width="8.2" height="8.2" rx="3.4" fill="#ff6800" filter="url(#bl)"/><rect x="208.0" y="255.5" width="3.2" height="3.2" fill="#64605e"/><circle cx="209.6" cy="257.1" r="1.1" fill="#d8d8d8" fill-opacity="0.8"/><rect x="214.5" y="259.3" width="8.2" height="8.2" rx="3.4" fill="#ff6800" filter="url(#bl)"/><rect x="217.0" y="261.8" width="3.2" height="3.2" fill="#64605e"/><circle cx="218.6" cy="263.4" r="1.1" fill="#d8d8d8" fill-opacity="0.8"/><rect x="237.5" y="257.2" width="11.8" height="11.8" rx="3.8" fill="#ff6800" filter="url(#bl)"/><rect x="240.3" y="260.0" width="6.2" height="6.2" fill="#64605e"/><circle cx="243.4" cy="263.1" r="2.6" fill="url(#pc)"/><rect x="243.1" y="255.7" width="7.2" height="7.2" rx="3.0" fill="#ff6800" filter="url(#bl)"/><rect x="245.6" y="258.2" width="2.2" height="2.2" fill="#64605e"/><circle cx="246.7" cy="259.3" r="0.8" fill="#d8d8d8" fill-opacity="0.8"/><circle cx="291.5" cy="255.7" r="2.5" fill="#e0661e" fill-opacity="0.5" filter="url(#bl2)"/><circle cx="166.1" cy="270.3" r="2.5" fill="#e0661e" fill-opacity="0.5" filter="url(#bl2)"/><rect x="203.3" y="281.0" width="9.8" height="9.8" rx="3.1" fill="#ff6800" filter="url(#bl)"/><rect x="206.1" y="283.8" width="4.2" height="4.2" fill="#64605e"/><circle cx="208.2" cy="285.9" r="1.8" fill="url(#pc)"/><rect x="212.9" y="284.6" width="8.2" height="8.2" rx="3.4" fill="#ff6800" filter="url(#bl)"/><rect x="215.4" y="287.1" width="3.2" height="3.2" fill="#64605e"/><circle cx="217.0" cy="288.7" r="1.1" fill="#d8d8d8" fill-opacity="0.8"/><rect x="217.8" y="286.0" width="8.2" height="8.2" rx="3.4" fill="#ff6800" filter="url(#bl)"/><rect x="220.3" y="288.5" width="3.2" height="3.2" fill="#64605e"/><circle cx="221.9" cy="290.1" r="1.1" fill="#d8d8d8" fill-opacity="0.8"/><circle cx="249.4" cy="279.1" r="2.5" fill="#e0661e" fill-opacity="0.5" filter="url(#bl2)"/><rect x="261.8" y="281.8" width="8.2" height="8.2" rx="3.4" fill="#ff6800" filter="url(#bl)"/><rect x="264.3" y="284.3" width="3.2" height="3.2" fill="#64605e"/><circle cx="265.9" cy="285.9" r="1.1" fill="#d8d8d8" fill-opacity="0.8"/><circle cx="270.0" cy="284.6" r="2.5" fill="#e0661e" fill-opacity="0.5" filter="url(#bl2)"/><rect x="279.4" y="274.2" width="9.8" height="9.8" rx="3.1" fill="#ff6800" filter="url(#bl)"/><rect x="282.2" y="277.0" width="4.2" height="4.2" fill="#64605e"/><circle cx="284.3" cy="279.1" r="1.8" fill="url(#pc)"/><circle cx="258.2" cy="292.0" r="2.5" fill="#e0661e" fill-opacity="0.5" filter="url(#bl2)"/><rect x="182.1" y="289.8" width="9.8" height="9.8" rx="3.1" fill="#ff6800" filter="url(#bl)"/><rect x="184.9" y="292.6" width="4.2" height="4.2" fill="#64605e"/><circle cx="187.0" cy="294.7" r="1.8" fill="url(#pc)"/><rect x="110.6" y="292.3" width="8.2" height="8.2" rx="3.4" fill="#ff6800" filter="url(#bl)"/><rect x="113.1" y="294.8" width="3.2" height="3.2" fill="#64605e"/><circle cx="114.7" cy="296.4" r="1.1" fill="#d8d8d8" fill-opacity="0.8"/><rect x="288.5" y="292.0" width="9.8" height="9.8" rx="3.1" fill="#ff6800" filter="url(#bl)"/><rect x="291.3" y="294.8" width="4.2" height="4.2" fill="#64605e"/><circle cx="293.4" cy="296.9" r="1.8" fill="url(#pc)"/><rect x="302.0" y="180.7" width="9.8" height="9.8" rx="3.1" fill="#ff6800" filter="url(#bl)"/><rect x="304.8" y="183.5" width="4.2" height="4.2" fill="#64605e"/><circle cx="306.9" cy="185.6" r="1.8" fill="url(#pc)"/><rect x="307.4" y="175.7" width="7.2" height="7.2" rx="3.0" fill="#ff6800" filter="url(#bl)"/><rect x="309.9" y="178.2" width="2.2" height="2.2" fill="#64605e"/><circle cx="311.0" cy="179.3" r="0.8" fill="#d8d8d8" fill-opacity="0.8"/><rect x="313.8" y="184.0" width="9.8" height="9.8" rx="3.1" fill="#ff6800" filter="url(#bl)"/><rect x="316.6" y="186.8" width="4.2" height="4.2" fill="#64605e"/><circle cx="318.7" cy="188.9" r="1.8" fill="url(#pc)"/><rect x="313.4" y="192.2" width="7.2" height="7.2" rx="3.0" fill="#ff6800" filter="url(#bl)"/><rect x="315.9" y="194.7" width="2.2" height="2.2" fill="#64605e"/><circle cx="317.0" cy="195.8" r="0.8" fill="#d8d8d8" fill-opacity="0.8"/><rect x="322.1" y="194.0" width="10.8" height="10.8" rx="3.5" fill="#ff6800" filter="url(#bl)"/><rect x="324.9" y="196.8" width="5.2" height="5.2" fill="#64605e"/><circle cx="327.5" cy="199.4" r="2.2" fill="url(#pc)"/><rect x="332.4" y="182.3" width="13.8" height="13.8" rx="4.4" fill="#ff6800" filter="url(#bl)"/><rect x="335.2" y="185.1" width="8.2" height="8.2" fill="#64605e"/><circle cx="339.3" cy="189.2" r="3.4" fill="url(#pc)"/><rect x="329.9" y="171.0" width="7.2" height="7.2" rx="3.0" fill="#ff6800" filter="url(#bl)"/><rect x="332.4" y="173.5" width="2.2" height="2.2" fill="#64605e"/><circle cx="333.5" cy="174.6" r="0.8" fill="#d8d8d8" fill-opacity="0.8"/><rect x="339.8" y="172.9" width="7.2" height="7.2" rx="3.0" fill="#ff6800" filter="url(#bl)"/><rect x="342.3" y="175.4" width="2.2" height="2.2" fill="#64605e"/><circle cx="343.4" cy="176.5" r="0.8" fill="#d8d8d8" fill-opacity="0.8"/><rect x="342.6" y="171.0" width="7.2" height="7.2" rx="3.0" fill="#ff6800" filter="url(#bl)"/><rect x="345.1" y="173.5" width="2.2" height="2.2" fill="#64605e"/><circle cx="346.2" cy="174.6" r="0.8" fill="#d8d8d8" fill-opacity="0.8"/><rect x="355.1" y="167.3" width="10.8" height="10.8" rx="3.5" fill="#ff6800" filter="url(#bl)"/><rect x="357.9" y="170.1" width="5.2" height="5.2" fill="#64605e"/><circle cx="360.5" cy="172.7" r="2.2" fill="url(#pc)"/><rect x="365.9" y="171.8" width="7.2" height="7.2" rx="3.0" fill="#ff6800" filter="url(#bl)"/><rect x="368.4" y="174.3" width="2.2" height="2.2" fill="#64605e"/><circle cx="369.5" cy="175.4" r="0.8" fill="#d8d8d8" fill-opacity="0.8"/><rect x="369.2" y="175.1" width="7.2" height="7.2" rx="3.0" fill="#ff6800" filter="url(#bl)"/><rect x="371.7" y="177.6" width="2.2" height="2.2" fill="#64605e"/><circle cx="372.8" cy="178.7" r="0.8" fill="#d8d8d8" fill-opacity="0.8"/><rect x="360.4" y="181.2" width="7.2" height="7.2" rx="3.0" fill="#ff6800" filter="url(#bl)"/><rect x="362.9" y="183.7" width="2.2" height="2.2" fill="#64605e"/><circle cx="364.0" cy="184.8" r="0.8" fill="#d8d8d8" fill-opacity="0.8"/><circle cx="359.9" cy="191.9" r="2.5" fill="#e0661e" fill-opacity="0.5" filter="url(#bl2)"/><rect x="378.3" y="166.9" width="7.2" height="7.2" rx="3.0" fill="#ff6800" filter="url(#bl)"/><rect x="380.8" y="169.4" width="2.2" height="2.2" fill="#64605e"/><circle cx="381.9" cy="170.5" r="0.8" fill="#d8d8d8" fill-opacity="0.8"/><circle cx="389.3" cy="169.1" r="2.5" fill="#e0661e" fill-opacity="0.5" filter="url(#bl2)"/><rect x="394.9" y="166.9" width="8.2" height="8.2" rx="3.4" fill="#ff6800" filter="url(#bl)"/><rect x="397.4" y="169.4" width="3.2" height="3.2" fill="#64605e"/><circle cx="399.0" cy="171.0" r="1.1" fill="#d8d8d8" fill-opacity="0.8"/><rect x="378.5" y="177.5" width="11.8" height="11.8" rx="3.8" fill="#ff6800" filter="url(#bl)"/><rect x="381.3" y="180.3" width="6.2" height="6.2" fill="#64605e"/><circle cx="384.4" cy="183.4" r="2.6" fill="url(#pc)"/><rect x="387.1" y="181.2" width="7.2" height="7.2" rx="3.0" fill="#ff6800" filter="url(#bl)"/><rect x="389.6" y="183.7" width="2.2" height="2.2" fill="#64605e"/><circle cx="390.7" cy="184.8" r="0.8" fill="#d8d8d8" fill-opacity="0.8"/><rect x="407.3" y="183.0" width="10.8" height="10.8" rx="3.5" fill="#ff6800" filter="url(#bl)"/><rect x="410.1" y="185.8" width="5.2" height="5.2" fill="#64605e"/><circle cx="412.7" cy="188.4" r="2.2" fill="url(#pc)"/><rect x="414.4" y="179.6" width="15.8" height="15.8" rx="5.1" fill="#ff6800" filter="url(#bl)"/><rect x="417.2" y="182.4" width="10.2" height="10.2" fill="#64605e"/><circle cx="422.3" cy="187.5" r="4.3" fill="url(#pc)"/><rect x="429.2" y="185.1" width="8.2" height="8.2" rx="3.4" fill="#ff6800" filter="url(#bl)"/><rect x="431.7" y="187.6" width="3.2" height="3.2" fill="#64605e"/><circle cx="433.3" cy="189.2" r="1.1" fill="#d8d8d8" fill-opacity="0.8"/><rect x="409.1" y="192.2" width="7.2" height="7.2" rx="3.0" fill="#ff6800" filter="url(#bl)"/><rect x="411.6" y="194.7" width="2.2" height="2.2" fill="#64605e"/><circle cx="412.7" cy="195.8" r="0.8" fill="#d8d8d8" fill-opacity="0.8"/><rect x="431.1" y="195.2" width="7.2" height="7.2" rx="3.0" fill="#ff6800" filter="url(#bl)"/><rect x="433.6" y="197.7" width="2.2" height="2.2" fill="#64605e"/><circle cx="434.7" cy="198.8" r="0.8" fill="#d8d8d8" fill-opacity="0.8"/><rect x="443.0" y="190.3" width="9.8" height="9.8" rx="3.1" fill="#ff6800" filter="url(#bl)"/><rect x="445.8" y="193.1" width="4.2" height="4.2" fill="#64605e"/><circle cx="447.9" cy="195.2" r="1.8" fill="url(#pc)"/><rect x="421.1" y="167.3" width="11.8" height="11.8" rx="3.8" fill="#ff6800" filter="url(#bl)"/><rect x="423.9" y="170.1" width="6.2" height="6.2" fill="#64605e"/><circle cx="427.0" cy="173.2" r="2.6" fill="url(#pc)"/><rect x="432.5" y="169.7" width="9.8" height="9.8" rx="3.1" fill="#ff6800" filter="url(#bl)"/><rect x="435.3" y="172.5" width="4.2" height="4.2" fill="#64605e"/><circle cx="437.4" cy="174.6" r="1.8" fill="url(#pc)"/><rect x="433.0" y="165.5" width="7.2" height="7.2" rx="3.0" fill="#ff6800" filter="url(#bl)"/><rect x="435.5" y="168.0" width="2.2" height="2.2" fill="#64605e"/><circle cx="436.6" cy="169.1" r="0.8" fill="#d8d8d8" fill-opacity="0.8"/><rect x="474.5" y="166.3" width="7.2" height="7.2" rx="3.0" fill="#ff6800" filter="url(#bl)"/><rect x="477.0" y="168.8" width="2.2" height="2.2" fill="#64605e"/><circle cx="478.1" cy="169.9" r="0.8" fill="#d8d8d8" fill-opacity="0.8"/><rect x="475.6" y="170.2" width="7.2" height="7.2" rx="3.0" fill="#ff6800" filter="url(#bl)"/><rect x="478.1" y="172.7" width="2.2" height="2.2" fill="#64605e"/><circle cx="479.2" cy="173.8" r="0.8" fill="#d8d8d8" fill-opacity="0.8"/><rect x="486.9" y="168.3" width="7.2" height="7.2" rx="3.0" fill="#ff6800" filter="url(#bl)"/><rect x="489.4" y="170.8" width="2.2" height="2.2" fill="#64605e"/><circle cx="490.5" cy="171.9" r="0.8" fill="#d8d8d8" fill-opacity="0.8"/><rect x="481.0" y="175.0" width="11.8" height="11.8" rx="3.8" fill="#ff6800" filter="url(#bl)"/><rect x="483.8" y="177.8" width="6.2" height="6.2" fill="#64605e"/><circle cx="486.9" cy="180.9" r="2.6" fill="url(#pc)"/><rect x="500.3" y="166.8" width="12.8" height="12.8" rx="4.1" fill="#ff6800" filter="url(#bl)"/><rect x="503.1" y="169.6" width="7.2" height="7.2" fill="#64605e"/><circle cx="506.7" cy="173.2" r="3.0" fill="url(#pc)"/><circle cx="496.0" cy="193.0" r="2.5" fill="#e0661e" fill-opacity="0.5" filter="url(#bl2)"/><rect x="473.3" y="193.4" width="10.8" height="10.8" rx="3.5" fill="#ff6800" filter="url(#bl)"/><rect x="476.1" y="196.2" width="5.2" height="5.2" fill="#64605e"/><circle cx="478.7" cy="198.8" r="2.2" fill="url(#pc)"/><circle cx="469.6" cy="208.4" r="2.5" fill="#e0661e" fill-opacity="0.5" filter="url(#bl2)"/><rect x="470.4" y="214.0" width="8.2" height="8.2" rx="3.4" fill="#ff6800" filter="url(#bl)"/><rect x="472.9" y="216.5" width="3.2" height="3.2" fill="#64605e"/><circle cx="474.5" cy="218.1" r="1.1" fill="#d8d8d8" fill-opacity="0.8"/><rect x="498.0" y="225.5" width="9.8" height="9.8" rx="3.1" fill="#ff6800" filter="url(#bl)"/><rect x="500.8" y="228.3" width="4.2" height="4.2" fill="#64605e"/><circle cx="502.9" cy="230.4" r="1.8" fill="url(#pc)"/><rect x="470.4" y="232.4" width="8.2" height="8.2" rx="3.4" fill="#ff6800" filter="url(#bl)"/><rect x="472.9" y="234.9" width="3.2" height="3.2" fill="#64605e"/><circle cx="474.5" cy="236.5" r="1.1" fill="#d8d8d8" fill-opacity="0.8"/><circle cx="504.8" cy="269.5" r="2.5" fill="#e0661e" fill-opacity="0.5" filter="url(#bl2)"/><rect x="310.2" y="201.9" width="9.8" height="9.8" rx="3.1" fill="#ff6800" filter="url(#bl)"/><rect x="313.0" y="204.7" width="4.2" height="4.2" fill="#64605e"/><circle cx="315.1" cy="206.8" r="1.8" fill="url(#pc)"/><rect x="338.6" y="202.2" width="10.8" height="10.8" rx="3.5" fill="#ff6800" filter="url(#bl)"/><rect x="341.4" y="205.0" width="5.2" height="5.2" fill="#64605e"/><circle cx="344.0" cy="207.6" r="2.2" fill="url(#pc)"/><circle cx="335.7" cy="209.8" r="2.5" fill="#e0661e" fill-opacity="0.5" filter="url(#bl2)"/><rect x="370.6" y="201.3" width="7.2" height="7.2" rx="3.0" fill="#ff6800" filter="url(#bl)"/><rect x="373.1" y="203.8" width="2.2" height="2.2" fill="#64605e"/><circle cx="374.2" cy="204.9" r="0.8" fill="#d8d8d8" fill-opacity="0.8"/><rect x="368.0" y="206.9" width="10.8" height="10.8" rx="3.5" fill="#ff6800" filter="url(#bl)"/><rect x="370.8" y="209.7" width="5.2" height="5.2" fill="#64605e"/><circle cx="373.4" cy="212.3" r="2.2" fill="url(#pc)"/><rect x="389.8" y="199.0" width="11.8" height="11.8" rx="3.8" fill="#ff6800" filter="url(#bl)"/><rect x="392.6" y="201.8" width="6.2" height="6.2" fill="#64605e"/><circle cx="395.7" cy="204.9" r="2.6" fill="url(#pc)"/><rect x="406.0" y="201.7" width="11.8" height="11.8" rx="3.8" fill="#ff6800" filter="url(#bl)"/><rect x="408.8" y="204.5" width="6.2" height="6.2" fill="#64605e"/><circle cx="411.9" cy="207.6" r="2.6" fill="url(#pc)"/><rect x="387.7" y="212.8" width="8.8" height="8.8" rx="2.8" fill="#ff6800" filter="url(#bl)"/><rect x="390.5" y="215.6" width="3.2" height="3.2" fill="#64605e"/><circle cx="392.1" cy="217.2" r="1.3" fill="url(#pc)"/><rect x="393.2" y="219.1" width="7.2" height="7.2" rx="3.0" fill="#ff6800" filter="url(#bl)"/><rect x="395.7" y="221.6" width="2.2" height="2.2" fill="#64605e"/><circle cx="396.8" cy="222.7" r="0.8" fill="#d8d8d8" fill-opacity="0.8"/><circle cx="375.6" cy="221.9" r="2.5" fill="#e0661e" fill-opacity="0.5" filter="url(#bl2)"/><circle cx="353.6" cy="217.2" r="2.5" fill="#e0661e" fill-opacity="0.5" filter="url(#bl2)"/><rect x="346.8" y="221.9" width="9.8" height="9.8" rx="3.1" fill="#ff6800" filter="url(#bl)"/><rect x="349.6" y="224.7" width="4.2" height="4.2" fill="#64605e"/><circle cx="351.7" cy="226.8" r="1.8" fill="url(#pc)"/><rect x="376.0" y="221.5" width="11.8" height="11.8" rx="3.8" fill="#ff6800" filter="url(#bl)"/><rect x="378.8" y="224.3" width="6.2" height="6.2" fill="#64605e"/><circle cx="381.9" cy="227.4" r="2.6" fill="url(#pc)"/><rect x="434.8" y="224.2" width="10.8" height="10.8" rx="3.5" fill="#ff6800" filter="url(#bl)"/><rect x="437.6" y="227.0" width="5.2" height="5.2" fill="#64605e"/><circle cx="440.2" cy="229.6" r="2.2" fill="url(#pc)"/><rect x="435.6" y="234.9" width="15.8" height="15.8" rx="5.1" fill="#ff6800" filter="url(#bl)"/><rect x="438.4" y="237.7" width="10.2" height="10.2" fill="#64605e"/><circle cx="443.5" cy="242.8" r="4.3" fill="url(#pc)"/><rect x="422.3" y="239.2" width="7.2" height="7.2" rx="3.0" fill="#ff6800" filter="url(#bl)"/><rect x="424.8" y="241.7" width="2.2" height="2.2" fill="#64605e"/><circle cx="425.9" cy="242.8" r="0.8" fill="#d8d8d8" fill-opacity="0.8"/><rect x="305.2" y="234.2" width="7.2" height="7.2" rx="3.0" fill="#ff6800" filter="url(#bl)"/><rect x="307.7" y="236.7" width="2.2" height="2.2" fill="#64605e"/><circle cx="308.8" cy="237.8" r="0.8" fill="#d8d8d8" fill-opacity="0.8"/><rect x="329.4" y="236.2" width="7.2" height="7.2" rx="3.0" fill="#ff6800" filter="url(#bl)"/><rect x="331.9" y="238.7" width="2.2" height="2.2" fill="#64605e"/><circle cx="333.0" cy="239.8" r="0.8" fill="#d8d8d8" fill-opacity="0.8"/><rect x="299.2" y="239.8" width="8.2" height="8.2" rx="3.4" fill="#ff6800" filter="url(#bl)"/><rect x="301.7" y="242.3" width="3.2" height="3.2" fill="#64605e"/><circle cx="303.3" cy="243.9" r="1.1" fill="#d8d8d8" fill-opacity="0.8"/><rect x="321.7" y="240.3" width="8.8" height="8.8" rx="2.8" fill="#ff6800" filter="url(#bl)"/><rect x="324.5" y="243.1" width="3.2" height="3.2" fill="#64605e"/><circle cx="326.1" cy="244.7" r="1.3" fill="url(#pc)"/><circle cx="357.7" cy="242.5" r="2.5" fill="#e0661e" fill-opacity="0.5" filter="url(#bl2)"/><rect x="367.1" y="235.1" width="9.8" height="9.8" rx="3.1" fill="#ff6800" filter="url(#bl)"/><rect x="369.9" y="237.9" width="4.2" height="4.2" fill="#64605e"/><circle cx="372.0" cy="240.0" r="1.8" fill="url(#pc)"/><rect x="370.7" y="238.4" width="9.8" height="9.8" rx="3.1" fill="#ff6800" filter="url(#bl)"/><rect x="373.5" y="241.2" width="4.2" height="4.2" fill="#64605e"/><circle cx="375.6" cy="243.3" r="1.8" fill="url(#pc)"/><rect x="304.9" y="251.6" width="13.8" height="13.8" rx="4.4" fill="#ff6800" filter="url(#bl)"/><rect x="307.7" y="254.4" width="8.2" height="8.2" fill="#64605e"/><circle cx="311.8" cy="258.5" r="3.4" fill="url(#pc)"/><circle cx="306.0" cy="270.8" r="2.5" fill="#e0661e" fill-opacity="0.5" filter="url(#bl2)"/><circle cx="318.4" cy="270.8" r="2.5" fill="#e0661e" fill-opacity="0.5" filter="url(#bl2)"/><rect x="342.6" y="273.5" width="7.2" height="7.2" rx="3.0" fill="#ff6800" filter="url(#bl)"/><rect x="345.1" y="276.0" width="2.2" height="2.2" fill="#64605e"/><circle cx="346.2" cy="277.1" r="0.8" fill="#d8d8d8" fill-opacity="0.8"/><rect x="366.0" y="275.8" width="8.2" height="8.2" rx="3.4" fill="#ff6800" filter="url(#bl)"/><rect x="368.5" y="278.3" width="3.2" height="3.2" fill="#64605e"/><circle cx="370.1" cy="279.9" r="1.1" fill="#d8d8d8" fill-opacity="0.8"/><rect x="392.1" y="270.6" width="9.8" height="9.8" rx="3.1" fill="#ff6800" filter="url(#bl)"/><rect x="394.9" y="273.4" width="4.2" height="4.2" fill="#64605e"/><circle cx="397.0" cy="275.5" r="1.8" fill="url(#pc)"/><rect x="408.5" y="270.0" width="7.2" height="7.2" rx="3.0" fill="#ff6800" filter="url(#bl)"/><rect x="411.0" y="272.5" width="2.2" height="2.2" fill="#64605e"/><circle cx="412.1" cy="273.6" r="0.8" fill="#d8d8d8" fill-opacity="0.8"/><rect x="405.3" y="274.4" width="8.2" height="8.2" rx="3.4" fill="#ff6800" filter="url(#bl)"/><rect x="407.8" y="276.9" width="3.2" height="3.2" fill="#64605e"/><circle cx="409.4" cy="278.5" r="1.1" fill="#d8d8d8" fill-opacity="0.8"/><rect x="410.8" y="282.7" width="8.2" height="8.2" rx="3.4" fill="#ff6800" filter="url(#bl)"/><rect x="413.3" y="285.2" width="3.2" height="3.2" fill="#64605e"/><circle cx="414.9" cy="286.8" r="1.1" fill="#d8d8d8" fill-opacity="0.8"/><rect x="418.8" y="259.0" width="8.2" height="8.2" rx="3.4" fill="#ff6800" filter="url(#bl)"/><rect x="421.3" y="261.5" width="3.2" height="3.2" fill="#64605e"/><circle cx="422.9" cy="263.1" r="1.1" fill="#d8d8d8" fill-opacity="0.8"/><rect x="424.3" y="259.6" width="9.8" height="9.8" rx="3.1" fill="#ff6800" filter="url(#bl)"/><rect x="427.1" y="262.4" width="4.2" height="4.2" fill="#64605e"/><circle cx="429.2" cy="264.5" r="1.8" fill="url(#pc)"/><rect x="434.8" y="265.4" width="10.8" height="10.8" rx="3.5" fill="#ff6800" filter="url(#bl)"/><rect x="437.6" y="268.2" width="5.2" height="5.2" fill="#64605e"/><circle cx="440.2" cy="270.8" r="2.2" fill="url(#pc)"/><rect x="433.8" y="271.9" width="7.2" height="7.2" rx="3.0" fill="#ff6800" filter="url(#bl)"/><rect x="436.3" y="274.4" width="2.2" height="2.2" fill="#64605e"/><circle cx="437.4" cy="275.5" r="0.8" fill="#d8d8d8" fill-opacity="0.8"/><circle cx="449.0" cy="270.0" r="2.5" fill="#e0661e" fill-opacity="0.5" filter="url(#bl2)"/><rect x="448.4" y="276.8" width="7.2" height="7.2" rx="3.0" fill="#ff6800" filter="url(#bl)"/><rect x="450.9" y="279.3" width="2.2" height="2.2" fill="#64605e"/><circle cx="452.0" cy="280.4" r="0.8" fill="#d8d8d8" fill-opacity="0.8"/><rect x="453.1" y="276.3" width="8.2" height="8.2" rx="3.4" fill="#ff6800" filter="url(#bl)"/><rect x="455.6" y="278.8" width="3.2" height="3.2" fill="#64605e"/><circle cx="457.2" cy="280.4" r="1.1" fill="#d8d8d8" fill-opacity="0.8"/><circle cx="388.8" cy="285.4" r="2.5" fill="#e0661e" fill-opacity="0.5" filter="url(#bl2)"/><rect x="329.5" y="292.6" width="9.8" height="9.8" rx="3.1" fill="#ff6800" filter="url(#bl)"/><rect x="332.3" y="295.4" width="4.2" height="4.2" fill="#64605e"/><circle cx="334.4" cy="297.5" r="1.8" fill="url(#pc)"/><rect x="512.4" y="186.5" width="8.2" height="8.2" rx="3.4" fill="#ff6800" filter="url(#bl)"/><rect x="514.9" y="189.0" width="3.2" height="3.2" fill="#64605e"/><circle cx="516.5" cy="190.6" r="1.1" fill="#d8d8d8" fill-opacity="0.8"/><rect x="577.1" y="197.5" width="10.8" height="10.8" rx="3.5" fill="#ff6800" filter="url(#bl)"/><rect x="579.9" y="200.3" width="5.2" height="5.2" fill="#64605e"/><circle cx="582.5" cy="202.9" r="2.2" fill="url(#pc)"/><circle cx="553.1" cy="249.4" r="2.5" fill="#e0661e" fill-opacity="0.5" filter="url(#bl2)"/><circle cx="597.6" cy="222.7" r="3.0" fill="#e0661e" fill-opacity="0.5" filter="url(#bl2)"/><circle cx="182.1" cy="308.2" r="2.5" fill="#e0661e" fill-opacity="0.5" filter="url(#bl2)"/><circle cx="178.0" cy="327.4" r="2.5" fill="#e0661e" fill-opacity="0.5" filter="url(#bl2)"/><rect x="257.7" y="316.2" width="8.2" height="8.2" rx="3.4" fill="#ff6800" filter="url(#bl)"/><rect x="260.2" y="318.7" width="3.2" height="3.2" fill="#64605e"/><circle cx="261.8" cy="320.3" r="1.1" fill="#d8d8d8" fill-opacity="0.8"/><rect x="259.6" y="318.9" width="8.2" height="8.2" rx="3.4" fill="#ff6800" filter="url(#bl)"/><rect x="262.1" y="321.4" width="3.2" height="3.2" fill="#64605e"/><circle cx="263.7" cy="323.0" r="1.1" fill="#d8d8d8" fill-opacity="0.8"/><circle cx="208.2" cy="372.5" r="2.5" fill="#e0661e" fill-opacity="0.5" filter="url(#bl2)"/><circle cx="221.4" cy="383.5" r="2.5" fill="#e0661e" fill-opacity="0.5" filter="url(#bl2)"/><rect x="243.4" y="372.3" width="8.2" height="8.2" rx="3.4" fill="#ff6800" filter="url(#bl)"/><rect x="245.9" y="374.8" width="3.2" height="3.2" fill="#64605e"/><circle cx="247.5" cy="376.4" r="1.1" fill="#d8d8d8" fill-opacity="0.8"/><rect x="266.0" y="365.5" width="10.8" height="10.8" rx="3.5" fill="#ff6800" filter="url(#bl)"/><rect x="268.8" y="368.3" width="5.2" height="5.2" fill="#64605e"/><circle cx="271.4" cy="370.9" r="2.2" fill="url(#pc)"/><rect x="265.9" y="390.4" width="8.2" height="8.2" rx="3.4" fill="#ff6800" filter="url(#bl)"/><rect x="268.4" y="392.9" width="3.2" height="3.2" fill="#64605e"/><circle cx="270.0" cy="394.5" r="1.1" fill="#d8d8d8" fill-opacity="0.8"/><rect x="285.2" y="409.1" width="9.2" height="9.2" rx="3.9" fill="#ff6800" filter="url(#bl)"/><rect x="287.7" y="411.6" width="4.2" height="4.2" fill="#64605e"/><circle cx="289.8" cy="413.7" r="1.5" fill="#d8d8d8" fill-opacity="0.8"/><circle cx="280.2" cy="424.2" r="2.5" fill="#e0661e" fill-opacity="0.5" filter="url(#bl2)"/><circle cx="229.4" cy="428.3" r="2.5" fill="#e0661e" fill-opacity="0.5" filter="url(#bl2)"/><rect x="307.4" y="306.0" width="13.8" height="13.8" rx="4.4" fill="#ff6800" filter="url(#bl)"/><rect x="310.2" y="308.8" width="8.2" height="8.2" fill="#64605e"/><circle cx="314.3" cy="312.9" r="3.4" fill="url(#pc)"/><rect x="337.7" y="320.6" width="8.2" height="8.2" rx="3.4" fill="#ff6800" filter="url(#bl)"/><rect x="340.2" y="323.1" width="3.2" height="3.2" fill="#64605e"/><circle cx="341.8" cy="324.7" r="1.1" fill="#d8d8d8" fill-opacity="0.8"/><rect x="344.1" y="338.6" width="11.8" height="11.8" rx="3.8" fill="#ff6800" filter="url(#bl)"/><rect x="346.9" y="341.4" width="6.2" height="6.2" fill="#64605e"/><circle cx="350.0" cy="344.5" r="2.6" fill="url(#pc)"/><circle cx="330.8" cy="354.9" r="2.5" fill="#e0661e" fill-opacity="0.5" filter="url(#bl2)"/><rect x="335.3" y="393.5" width="9.2" height="9.2" rx="3.9" fill="#ff6800" filter="url(#bl)"/><rect x="337.8" y="396.0" width="4.2" height="4.2" fill="#64605e"/><circle cx="339.9" cy="398.1" r="1.5" fill="#d8d8d8" fill-opacity="0.8"/><rect x="362.7" y="330.8" width="8.2" height="8.2" rx="3.4" fill="#ff6800" filter="url(#bl)"/><rect x="365.2" y="333.3" width="3.2" height="3.2" fill="#64605e"/><circle cx="366.8" cy="334.9" r="1.1" fill="#d8d8d8" fill-opacity="0.8"/><circle cx="392.1" cy="333.5" r="2.5" fill="#e0661e" fill-opacity="0.5" filter="url(#bl2)"/><circle cx="381.9" cy="344.5" r="2.5" fill="#e0661e" fill-opacity="0.5" filter="url(#bl2)"/><rect x="401.8" y="298.4" width="10.8" height="10.8" rx="3.5" fill="#ff6800" filter="url(#bl)"/><rect x="404.6" y="301.2" width="5.2" height="5.2" fill="#64605e"/><circle cx="407.2" cy="303.8" r="2.2" fill="url(#pc)"/><rect x="405.4" y="312.9" width="9.2" height="9.2" rx="3.9" fill="#ff6800" filter="url(#bl)"/><rect x="407.9" y="315.4" width="4.2" height="4.2" fill="#64605e"/><circle cx="410.0" cy="317.5" r="1.5" fill="#d8d8d8" fill-opacity="0.8"/><rect x="407.8" y="330.5" width="9.8" height="9.8" rx="3.1" fill="#ff6800" filter="url(#bl)"/><rect x="410.6" y="333.3" width="4.2" height="4.2" fill="#64605e"/><circle cx="412.7" cy="335.4" r="1.8" fill="url(#pc)"/><rect x="405.0" y="339.8" width="8.2" height="8.2" rx="3.4" fill="#ff6800" filter="url(#bl)"/><rect x="407.5" y="342.3" width="3.2" height="3.2" fill="#64605e"/><circle cx="409.1" cy="343.9" r="1.1" fill="#d8d8d8" fill-opacity="0.8"/><circle cx="409.4" cy="354.9" r="2.5" fill="#e0661e" fill-opacity="0.5" filter="url(#bl2)"/><rect x="412.5" y="359.4" width="9.8" height="9.8" rx="3.1" fill="#ff6800" filter="url(#bl)"/><rect x="415.3" y="362.2" width="4.2" height="4.2" fill="#64605e"/><circle cx="417.4" cy="364.3" r="1.8" fill="url(#pc)"/><circle cx="401.2" cy="388.5" r="2.5" fill="#e0661e" fill-opacity="0.5" filter="url(#bl2)"/><rect x="430.1" y="321.2" width="10.8" height="10.8" rx="3.5" fill="#ff6800" filter="url(#bl)"/><rect x="432.9" y="324.0" width="5.2" height="5.2" fill="#64605e"/><circle cx="435.5" cy="326.6" r="2.2" fill="url(#pc)"/><rect x="429.0" y="334.1" width="9.8" height="9.8" rx="3.1" fill="#ff6800" filter="url(#bl)"/><rect x="431.8" y="336.9" width="4.2" height="4.2" fill="#64605e"/><circle cx="433.9" cy="339.0" r="1.8" fill="url(#pc)"/><rect x="423.2" y="337.1" width="9.2" height="9.2" rx="3.9" fill="#ff6800" filter="url(#bl)"/><rect x="425.7" y="339.6" width="4.2" height="4.2" fill="#64605e"/><circle cx="427.8" cy="341.7" r="1.5" fill="#d8d8d8" fill-opacity="0.8"/><rect x="462.6" y="343.5" width="11.8" height="11.8" rx="3.8" fill="#ff6800" filter="url(#bl)"/><rect x="465.4" y="346.3" width="6.2" height="6.2" fill="#64605e"/><circle cx="468.5" cy="349.4" r="2.6" fill="url(#pc)"/><rect x="490.7" y="306.0" width="7.2" height="7.2" rx="3.0" fill="#ff6800" filter="url(#bl)"/><rect x="493.2" y="308.5" width="2.2" height="2.2" fill="#64605e"/><circle cx="494.3" cy="309.6" r="0.8" fill="#d8d8d8" fill-opacity="0.8"/><rect x="499.8" y="298.3" width="7.2" height="7.2" rx="3.0" fill="#ff6800" filter="url(#bl)"/><rect x="502.3" y="300.8" width="2.2" height="2.2" fill="#64605e"/><circle cx="503.4" cy="301.9" r="0.8" fill="#d8d8d8" fill-opacity="0.8"/><rect x="443.4" y="418.8" width="11.8" height="11.8" rx="3.8" fill="#ff6800" filter="url(#bl)"/><rect x="446.2" y="421.6" width="6.2" height="6.2" fill="#64605e"/><circle cx="449.3" cy="424.7" r="2.6" fill="url(#pc)"/><circle cx="73.0" cy="32.6" r="2.5" fill="#e0661e" fill-opacity="0.5" filter="url(#bl2)"/><circle cx="505.0" cy="269.3" r="3.0" fill="#e0661e" fill-opacity="0.5" filter="url(#bl2)"/><circle cx="222.0" cy="459.0" r="2.5" fill="#e0661e" fill-opacity="0.5" filter="url(#bl2)"/><circle cx="380.0" cy="441.0" r="2.5" fill="#e0661e" fill-opacity="0.5" filter="url(#bl2)"/><line x1="0.0" y1="20.9" x2="324.4" y2="15.7" stroke="#f2dc1c" stroke-width="1.4"/><line x1="324.4" y1="15.7" x2="680.2" y2="22.1" stroke="#f2dc1c" stroke-width="1.4"/><line x1="0.0" y1="21.5" x2="367.4" y2="60.0" stroke="#f2dc1c" stroke-width="1.4"/><line x1="367.4" y1="60.0" x2="680.2" y2="22.1" stroke="#f2dc1c" stroke-width="1.4"/><line x1="324.4" y1="16.0" x2="324.4" y2="246.8" stroke="#f2dc1c" stroke-width="1.4"/><line x1="367.4" y1="60.0" x2="342.2" y2="699.3" stroke="#f2dc1c" stroke-width="1.4"/><line x1="680.2" y1="22.1" x2="566.0" y2="367.0" stroke="#f2dc1c" stroke-width="1.4"/><line x1="0.0" y1="53.0" x2="95.8" y2="360.2" stroke="#f2dc1c" stroke-width="1.4"/><line x1="95.8" y1="360.2" x2="342.2" y2="699.3" stroke="#f2dc1c" stroke-width="1.4"/><line x1="95.8" y1="360.2" x2="324.4" y2="246.8" stroke="#f2dc1c" stroke-width="1.4"/><line x1="324.4" y1="246.8" x2="566.0" y2="367.0" stroke="#f2dc1c" stroke-width="1.4"/><line x1="566.0" y1="367.0" x2="342.2" y2="699.3" stroke="#f2dc1c" stroke-width="1.4"/><defs><linearGradient id="bsq" x1="0" y1="0" x2="0" y2="1"><stop offset="0" stop-color="#9ab4e0" stop-opacity="0.75"/><stop offset="1" stop-color="#5a6ea8" stop-opacity="0.35"/></linearGradient><linearGradient id="rsq" x1="0" y1="0" x2="0" y2="1"><stop offset="0" stop-color="#d8a8a0" stop-opacity="0.6"/><stop offset="1" stop-color="#a06060" stop-opacity="0.3"/></linearGradient><linearGradient id="rcone" x1="0" y1="0" x2="0" y2="1"><stop offset="0" stop-color="#ff5a28"/><stop offset="0.55" stop-color="#e8441c"/><stop offset="0.85" stop-color="#8a2a14"/><stop offset="1" stop-color="#200a05"/></linearGradient><linearGradient id="bcone" x1="0" y1="0" x2="0" y2="1"><stop offset="0" stop-color="#3c8cff"/><stop offset="0.55" stop-color="#3a78e8"/><stop offset="0.85" stop-color="#1e3c80"/><stop offset="1" stop-color="#0a1020"/></linearGradient><linearGradient id="gcone" x1="0" y1="0" x2="0" y2="1"><stop offset="0" stop-color="#a0f070"/><stop offset="1" stop-color="#58c030"/></linearGradient></defs><rect x="306.5" y="16.5" width="17" height="26.5" fill="url(#bsq)" stroke="#4a7ae8" stroke-width="1.5"/><rect x="325.8" y="16.5" width="18" height="26.5" fill="url(#rsq)" stroke="#d85a44" stroke-width="1.5"/><line x1="306" y1="43.6" x2="324" y2="44" stroke="#e88a40" stroke-width="1.6"/><line x1="324" y1="43.8" x2="256" y2="49" stroke="#e05c3c" stroke-width="2.6"/><line x1="324" y1="43.8" x2="394" y2="48.6" stroke="#558ae8" stroke-width="2.6"/><line x1="315" y1="45.8" x2="334" y2="45.8" stroke="#7cd050" stroke-width="1.6"/><line x1="324.8" y1="0" x2="324.8" y2="16" stroke="#d8f07a" stroke-width="1.8"/><path d="M229.3 50.3 L251.7 39.3 Q258 41 257.2 50 Q257 57 253.4 58.2 Z" fill="url(#rcone)"/><path d="M420.7 50.7 L397 39.7 Q392.5 42 393 50 Q393.5 57 397 58.2 Z" fill="url(#bcone)"/><path d="M774 -1 L792 -1 L783.2 26.5 Z" fill="url(#gcone)"/><path d="M762.2 23.6 L776 32.5 L759.4 30.8 A3.7 3.7 0 0 1 762.2 23.6 Z" fill="#eeeeee"/><path d="M803.8 23.6 L790 32.5 L806.6 30.8 A3.7 3.7 0 0 0 803.8 23.6 Z" fill="#eeeeee"/><path d="M772.5 31 L783 26.5 L793.5 31 L793.5 43.5 L783 48.5 L772.5 43.5 Z" fill="#c4c4c4"/><path d="M772.5 31 L783 26.5 L793.5 31 L783 35.5 Z" fill="#b0b0b0"/><path d="M777 65 Q783 67.5 789.5 65 L783.2 48 Z" fill="#f2f2f2"/><path d="M748 41 L774 39 L756 58 Q749 52 748 41 Z" fill="#c8442a"/><path d="M748 41 L758 40.3 L756 58 Q749 52 748 41 Z" fill="#d85234" fill-opacity="0.7"/><path d="M818 41 L792 39 L810 58 Q817 52 818 41 Z" fill="#3d6ee0"/><path d="M818 41 L808 40.3 L810 58 Q817 52 818 41 Z" fill="#4a80f0" fill-opacity="0.8"/><g stroke="#d0d0d0" stroke-width="1.1" fill="none"><path d="M765 92.5 L752.2 98.5 L765 104.6 M752.2 98.5 L765 98.5"/></g></svg>
<div class="t" style="left:767.70px;top:87.70px;font-size:15px;line-height:22px;color:#cfcfcf;letter-spacing:0.514px;font-weight:normal;">Persp</div>
<div class="t" style="left:737px;top:46.23px;font-size:10px;line-height:15px;color:#f0f0f0;letter-spacing:0px;font-weight:bold;">X</div>
<div class="t" style="left:819px;top:46.23px;font-size:10px;line-height:15px;color:#f0f0f0;letter-spacing:0px;font-weight:bold;">Z</div>
<div class="r" style="left:819px;top:0px;width:9px;height:2.5px;background:#cfcfcf;"></div>
</div>
<div class="r" style="left:0px;top:471px;width:853px;height:20px;background:#242424;border-top:1px solid #141414;box-sizing:border-box"></div>
<div class="r" style="left:566px;top:221px;width:284px;height:246.5px;background:rgba(8,8,8,0.87);border-radius:5px"></div>
<div class="r" style="left:573px;top:227.5px;width:20px;height:1.2px;background:#8a8a8a;"></div>
<div class="r" style="left:573px;top:231.8px;width:20px;height:1.2px;background:#8a8a8a;"></div>
<div class="t" style="left:599.50px;top:219.20px;font-size:15px;line-height:22px;color:#b8b8b8;letter-spacing:0.485px;font-weight:normal;">Particles</div>
<div class="r" style="left:572px;top:245px;width:273px;height:23px;background:#585858;border-radius:3px"></div>
<div class="r" style="left:662px;top:245px;width:1px;height:23px;background:#2e2e2e;"></div>
<div class="r" style="left:761px;top:245px;width:1px;height:23px;background:#2e2e2e;"></div>
<div class="t" style="left:593.10px;top:245.60px;font-size:15px;line-height:22px;color:#e0e0e0;letter-spacing:0.828px;font-weight:normal;">Pause</div>
<div class="t" style="left:686.20px;top:245.60px;font-size:15px;line-height:22px;color:#e0e0e0;letter-spacing:0.537px;font-weight:normal;">Restart</div>
<div class="t" style="left:784.80px;top:245.60px;font-size:15px;line-height:22px;color:#e0e0e0;letter-spacing:0.862px;font-weight:normal;">Stop</div>
<div class="t" style="left:571.20px;top:274.60px;font-size:15px;line-height:22px;color:#d2d2d2;letter-spacing:0.834px;font-weight:normal;">Playback Speed</div>
<div class="r" style="left:712px;top:275.3px;width:133px;height:21px;background:#2a2a2a;border-radius:3px"></div>
<div class="t" style="left:714.90px;top:274.60px;font-size:15px;line-height:22px;color:#d2d2d2;letter-spacing:0.783px;font-weight:normal;">1.00</div>
<div class="t" style="left:571.20px;top:299.60px;font-size:15px;line-height:22px;color:#d2d2d2;letter-spacing:0.895px;font-weight:normal;">Playback Time</div>
<div class="r" style="left:712px;top:300.3px;width:133px;height:21px;background:#2a2a2a;border-radius:3px"></div>
<div class="t" style="left:715.50px;top:299.60px;font-size:15px;line-height:22px;color:#d2d2d2;letter-spacing:1.253px;font-weight:normal;">339.49</div>
<div class="t" style="left:571.20px;top:324.70px;font-size:15px;line-height:22px;color:#d2d2d2;letter-spacing:0.785px;font-weight:normal;">Particles</div>
<div class="t" style="left:712.20px;top:324.70px;font-size:15px;line-height:22px;color:#d2d2d2;letter-spacing:1.508px;font-weight:normal;">500</div>
<div class="t" style="left:571.80px;top:349.50px;font-size:15px;line-height:22px;color:#d2d2d2;letter-spacing:0.410px;font-weight:normal;">Speed Range</div>
<div class="t" style="left:712.30px;top:349.50px;font-size:15px;line-height:22px;color:#d2d2d2;letter-spacing:0.751px;font-weight:normal;">0.5 - 2.6</div>
<div class="t" style="left:571.80px;top:374.80px;font-size:15px;line-height:22px;color:#d2d2d2;letter-spacing:0.618px;font-weight:normal;">Simulate Layers</div>
<div class="r" style="left:712px;top:375px;width:133px;height:20.5px;background:#585858;border-radius:3px"></div>
<div class="t" style="left:715.60px;top:374.00px;font-size:15px;line-height:22px;color:#e0e0e0;letter-spacing:0.907px;font-weight:normal;">Nothing</div>
<svg class="r" style="left:828px;top:382.5px" width="11" height="5"><path d="M0 0H11L5.5 5Z" fill="#d0d0d0"/></svg>
<div class="r" style="left:570.9px;top:400.7px;width:17.3px;height:17px;background:#2a2a2a;border-radius:3px"></div>
<svg class="r" style="left:570.9px;top:400.7px" width="18" height="17"><path d="M3.9 9L6.6 12L13.2 4.6" stroke="#ececec" stroke-width="1.8" fill="none" stroke-linecap="round"/></svg>
<div class="t" style="left:591.50px;top:399.80px;font-size:15px;line-height:22px;color:#d2d2d2;letter-spacing:0.613px;font-weight:normal;">Resimulate</div>
<div class="r" style="left:570.9px;top:422.5px;width:17.3px;height:17px;background:#2a2a2a;border-radius:3px"></div>
<svg class="r" style="left:570.9px;top:422.5px" width="18" height="17"><path d="M3.9 9L6.6 12L13.2 4.6" stroke="#ececec" stroke-width="1.8" fill="none" stroke-linecap="round"/></svg>
<div class="t" style="left:592.10px;top:421.60px;font-size:15px;line-height:22px;color:#d2d2d2;letter-spacing:0.604px;font-weight:normal;">Show Bounds</div>
<div class="r" style="left:570.9px;top:445.2px;width:17.3px;height:17px;background:#2a2a2a;border-radius:3px"></div>
<div class="t" style="left:592.10px;top:444.30px;font-size:15px;line-height:22px;color:#d2d2d2;letter-spacing:0.651px;font-weight:normal;">Show Only Selected</div>
<svg class="r" style="left:808px;top:476px" width="14" height="15"><path d="M10.5 7.5V3.5Q10.5 2 8.5 2H6.5Q4.5 2 4.5 3.5V5" stroke="#c8c8c8" stroke-width="1.2" fill="none"/><rect x="2.6" y="7.6" width="9.8" height="5.8" stroke="#c8c8c8" stroke-width="1.2" fill="none"/></svg>
<div class="r" style="left:834.5px;top:478.0px;width:3px;height:3px;border-radius:50%;background:#c8c8c8"></div>
<div class="r" style="left:834.5px;top:482.6px;width:3px;height:3px;border-radius:50%;background:#c8c8c8"></div>
<div class="r" style="left:834.5px;top:486.8px;width:3px;height:3px;border-radius:50%;background:#c8c8c8"></div>
<div class="r" style="left:853px;top:0px;width:489px;height:491px;background:#383838;"></div>
<div class="r" style="left:853px;top:0px;width:2px;height:491px;background:#191919;"></div>
<div class="r" style="left:862px;top:78px;width:463px;height:268px;background:#3c3c3c;border-left:1px solid #303030;box-sizing:border-box"></div>
<div class="r" style="left:862px;top:-1px;width:463px;height:18.5px;background:#575757;border-radius:3px 0 0 3px;border-bottom:1px solid #232323;box-sizing:content-box"></div>
<div class="r" style="left:866.3px;top:1.1px;width:14.5px;height:14.4px;background:#2b2b2b;border-radius:2.5px;border-top:1px solid #1e1e1e;box-sizing:border-box"></div>
<div class="t" style="left:883.50px;top:-1.50px;font-size:13px;line-height:20px;color:#c4c4c4;letter-spacing:0.704px;font-weight:normal;">Rotation over Lifetime</div>
<div class="r" style="left:862px;top:19px;width:463px;height:18.5px;background:#575757;border-radius:3px 0 0 3px;border-bottom:1px solid #232323;box-sizing:content-box"></div>
<div class="r" style="left:866.3px;top:21.1px;width:14.5px;height:14.4px;background:#2b2b2b;border-radius:2.5px;border-top:1px solid #1e1e1e;box-sizing:border-box"></div>
<div class="t" style="left:883.50px;top:18.50px;font-size:13px;line-height:20px;color:#c4c4c4;letter-spacing:0.679px;font-weight:normal;">Rotation by Speed</div>
<div class="r" style="left:862px;top:39px;width:463px;height:18.5px;background:#575757;border-radius:3px 0 0 3px;border-bottom:1px solid #232323;box-sizing:content-box"></div>
<div class="r" style="left:866.3px;top:41.1px;width:14.5px;height:14.4px;background:#2b2b2b;border-radius:2.5px;border-top:1px solid #1e1e1e;box-sizing:border-box"></div>
<div class="t" style="left:883.50px;top:38.50px;font-size:13px;line-height:20px;color:#c4c4c4;letter-spacing:0.583px;font-weight:normal;">External Forces</div>
<div class="r" style="left:862px;top:59px;width:463px;height:18.5px;background:#575757;border-radius:3px 0 0 3px;border-bottom:1px solid #232323;box-sizing:content-box"></div>
<div class="r" style="left:866.3px;top:61.1px;width:14.5px;height:14.4px;background:#2b2b2b;border-radius:2.5px;border-top:1px solid #1e1e1e;box-sizing:border-box"></div>
<svg class="r" style="left:866.3px;top:61.1px" width="15" height="15"><path d="M2 8.2L4.9 10.1L11.4 4.3" stroke="#e6e6e6" stroke-width="1.5" fill="none" stroke-linecap="round"/></svg>
<div class="t" style="left:883.50px;top:58.50px;font-size:13px;line-height:20px;color:#c4c4c4;letter-spacing:0.448px;font-weight:normal;">Noise</div>
<div class="r" style="left:862px;top:346px;width:463px;height:18.5px;background:#575757;border-radius:3px 0 0 3px;border-bottom:1px solid #232323;box-sizing:content-box"></div>
<div class="r" style="left:866.3px;top:348.1px;width:14.5px;height:14.4px;background:#2b2b2b;border-radius:2.5px;border-top:1px solid #1e1e1e;box-sizing:border-box"></div>
<div class="t" style="left:883.90px;top:345.50px;font-size:13px;line-height:20px;color:#c4c4c4;letter-spacing:0.225px;font-weight:normal;">Collision</div>
<div class="r" style="left:862px;top:366px;width:463px;height:18.5px;background:#575757;border-radius:3px 0 0 3px;border-bottom:1px solid #232323;box-sizing:content-box"></div>
<div class="r" style="left:866.3px;top:368.1px;width:14.5px;height:14.4px;background:#2b2b2b;border-radius:2.5px;border-top:1px solid #1e1e1e;box-sizing:border-box"></div>
<div class="t" style="left:884.30px;top:365.50px;font-size:13px;line-height:20px;color:#c4c4c4;letter-spacing:0.615px;font-weight:normal;">Triggers</div>
<div class="r" style="left:862px;top:386px;width:463px;height:18.5px;background:#575757;border-radius:3px 0 0 3px;border-bottom:1px solid #232323;box-sizing:content-box"></div>
<div class="r" style="left:866.3px;top:388.1px;width:14.5px;height:14.4px;background:#2b2b2b;border-radius:2.5px;border-top:1px solid #1e1e1e;box-sizing:border-box"></div>
<div class="t" style="left:884.00px;top:385.50px;font-size:13px;line-height:20px;color:#c4c4c4;letter-spacing:0.499px;font-weight:normal;">Sub Emitters</div>
<div class="r" style="left:862px;top:406px;width:463px;height:18.5px;background:#575757;border-radius:3px 0 0 3px;border-bottom:1px solid #232323;box-sizing:content-box"></div>
<div class="r" style="left:866.3px;top:408.1px;width:14.5px;height:14.4px;background:#2b2b2b;border-radius:2.5px;border-top:1px solid #1e1e1e;box-sizing:border-box"></div>
<div class="t" style="left:884.30px;top:405.50px;font-size:13px;line-height:20px;color:#c4c4c4;letter-spacing:0.622px;font-weight:normal;">Texture Sheet Animation</div>
<div class="r" style="left:862px;top:426px;width:463px;height:18.5px;background:#575757;border-radius:3px 0 0 3px;border-bottom:1px solid #232323;box-sizing:content-box"></div>
<div class="r" style="left:866.3px;top:428.1px;width:14.5px;height:14.4px;background:#2b2b2b;border-radius:2.5px;border-top:1px solid #1e1e1e;box-sizing:border-box"></div>
<div class="t" style="left:883.50px;top:425.50px;font-size:13px;line-height:20px;color:#c4c4c4;letter-spacing:0.922px;font-weight:normal;">Lights</div>
<div class="r" style="left:862px;top:446px;width:463px;height:18.5px;background:#575757;border-radius:3px 0 0 3px;border-bottom:1px solid #232323;box-sizing:content-box"></div>
<div class="r" style="left:866.3px;top:448.1px;width:14.5px;height:14.4px;background:#2b2b2b;border-radius:2.5px;border-top:1px solid #1e1e1e;box-sizing:border-box"></div>
<div class="t" style="left:884.30px;top:445.50px;font-size:13px;line-height:20px;color:#c4c4c4;letter-spacing:1.961px;font-weight:normal;">Trails</div>
<div class="t" style="left:866.90px;top:81.50px;font-size:13px;line-height:20px;color:#c4c4c4;letter-spacing:0.535px;font-weight:normal;">Separate Axes</div>
<div class="t" style="left:866.90px;top:100.10px;font-size:13px;line-height:20px;color:#c4c4c4;letter-spacing:0.841px;font-weight:normal;">Strength</div>
<div class="t" style="left:866.40px;top:118.50px;font-size:13px;line-height:20px;color:#c4c4c4;letter-spacing:0.810px;font-weight:normal;">Frequency</div>
<div class="t" style="left:866.90px;top:137.10px;font-size:13px;line-height:20px;color:#c4c4c4;letter-spacing:0.502px;font-weight:normal;">Scroll Speed</div>
<div class="t" style="left:866.40px;top:156.10px;font-size:13px;line-height:20px;color:#c4c4c4;letter-spacing:0.617px;font-weight:normal;">Damping</div>
<div class="t" style="left:866.80px;top:174.00px;font-size:13px;line-height:20px;color:#c4c4c4;letter-spacing:0.986px;font-weight:normal;">Octaves</div>
<div class="t" style="left:866.80px;top:193.30px;font-size:13px;line-height:20px;color:#6e6e6e;letter-spacing:0.664px;font-weight:normal;">Octave Multiplier</div>
<div class="t" style="left:866.80px;top:212.30px;font-size:13px;line-height:20px;color:#6e6e6e;letter-spacing:0.774px;font-weight:normal;">Octave Scale</div>
<div class="t" style="left:866.80px;top:231.00px;font-size:13px;line-height:20px;color:#c4c4c4;letter-spacing:0.607px;font-weight:normal;">Quality</div>
<div class="t" style="left:866.40px;top:249.80px;font-size:13px;line-height:20px;color:#c4c4c4;letter-spacing:0.431px;font-weight:normal;">Remap</div>
<div class="t" style="left:866.40px;top:268.70px;font-size:13px;line-height:20px;color:#6e6e6e;letter-spacing:0.523px;font-weight:normal;">Remap Curve</div>
<div class="t" style="left:866.40px;top:287.50px;font-size:13px;line-height:20px;color:#c4c4c4;letter-spacing:0.504px;font-weight:normal;">Position Amount</div>
<div class="t" style="left:866.40px;top:306.30px;font-size:13px;line-height:20px;color:#c4c4c4;letter-spacing:0.641px;font-weight:normal;">Rotation Amount</div>
<div class="t" style="left:866.90px;top:325.00px;font-size:13px;line-height:20px;color:#c4c4c4;letter-spacing:0.331px;font-weight:normal;">Size Amount</div>
<div class="r" style="left:1027.4px;top:83px;width:14.3px;height:14.4px;background:#2b2b2b;border:1px solid #232323;border-top-color:#181818;border-radius:2.5px;box-sizing:border-box"></div>
<div class="r" style="left:1026.5px;top:101px;width:132px;height:18px;background:#2a2a2a;border:1px solid #212121;border-radius:3px;box-sizing:border-box"></div>
<div class="t" style="left:1030.5px;top:100.00px;font-size:13px;line-height:20px;color:#d0d0d0;letter-spacing:0.4px;font-weight:normal;">0.2</div>
<svg class="r" style="left:1162.8px;top:106.2px" width="10" height="6"><path d="M0 0H9.4L4.7 5.4Z" fill="#c4c4c4"/></svg>
<div class="r" style="left:1026.5px;top:120.3px;width:149.5px;height:17.500000000000014px;background:#2a2a2a;border:1px solid #212121;border-radius:3px;box-sizing:border-box"></div>
<div class="t" style="left:1030.5px;top:119.30px;font-size:13px;line-height:20px;color:#d0d0d0;letter-spacing:0.4px;font-weight:normal;">0.5</div>
<div class="r" style="left:1026.5px;top:139.1px;width:132px;height:17.599999999999994px;background:#2a2a2a;border:1px solid #212121;border-radius:3px;box-sizing:border-box"></div>
<div class="t" style="left:1030.5px;top:138.10px;font-size:13px;line-height:20px;color:#d0d0d0;letter-spacing:0.4px;font-weight:normal;">0</div>
<svg class="r" style="left:1162.8px;top:144.09999999999997px" width="10" height="6"><path d="M0 0H9.4L4.7 5.4Z" fill="#c4c4c4"/></svg>
<div class="r" style="left:1027.4px;top:158px;width:14.3px;height:14.4px;background:#2b2b2b;border:1px solid #232323;border-top-color:#181818;border-radius:2.5px;box-sizing:border-box"></div>
<svg class="r" style="left:1027.4px;top:158px" width="15" height="15"><path d="M1.8 8.3L4.9 10.2L11.4 4.3" stroke="#e6e6e6" stroke-width="1.5" fill="none" stroke-linecap="round"/></svg>
<div class="r" style="left:1026.5px;top:176px;width:149.5px;height:17.80000000000001px;background:#2a2a2a;border:1px solid #212121;border-radius:3px;box-sizing:border-box"></div>
<div class="t" style="left:1030.5px;top:175.00px;font-size:13px;line-height:20px;color:#d0d0d0;letter-spacing:0.4px;font-weight:normal;">1</div>
<div class="r" style="left:1026.5px;top:195.3px;width:149.5px;height:17.399999999999977px;background:#2f2f2f;border:1px solid #2b2b2b;border-radius:3px;box-sizing:border-box"></div>
<div class="t" style="left:1030.5px;top:194.30px;font-size:13px;line-height:20px;color:#6e6e6e;letter-spacing:0.4px;font-weight:normal;">0.5</div>
<div class="r" style="left:1026.5px;top:214.5px;width:149.5px;height:17.400000000000006px;background:#2f2f2f;border:1px solid #2b2b2b;border-radius:3px;box-sizing:border-box"></div>
<div class="t" style="left:1030.5px;top:213.50px;font-size:13px;line-height:20px;color:#6e6e6e;letter-spacing:0.4px;font-weight:normal;">2</div>
<div class="r" style="left:1026.5px;top:233.8px;width:149.5px;height:16.5px;background:#515151;border:1px solid #303030;border-radius:3px;box-sizing:border-box"></div>
<div class="t" style="left:1029.30px;top:232.50px;font-size:13px;line-height:20px;color:#d0d0d0;letter-spacing:0.500px;font-weight:normal;">Medium (2D)</div>
<svg class="r" style="left:1158.5px;top:239px" width="10" height="6"><path d="M0 0H10L5 6Z" fill="#c4c4c4"/></svg>
<div class="r" style="left:1027.4px;top:252px;width:14.3px;height:14.4px;background:#2b2b2b;border:1px solid #232323;border-top-color:#181818;border-radius:2.5px;box-sizing:border-box"></div>
<div class="r" style="left:1027px;top:270.7px;width:131px;height:14.5px;background:#4a4a4a;"></div>
<div class="r" style="left:1027px;top:270.7px;width:131px;height:6px;background:#505050;"></div>
<div class="r" style="left:1027px;top:276.7px;width:131px;height:1.5px;background:#444444;"></div>
<svg class="r" style="left:1027px;top:270.7px" width="131" height="15"><line x1="0" y1="14" x2="131" y2="0.5" stroke="#6e6e6e" stroke-width="1.2"/></svg>
<svg class="r" style="left:1163px;top:276.4px" width="9" height="5"><path d="M0 0H9L4.5 5Z" fill="#6a6a6a"/></svg>
<div class="r" style="left:1026.5px;top:289.2px;width:132px;height:17.80000000000001px;background:#2a2a2a;border:1px solid #212121;border-radius:3px;box-sizing:border-box"></div>
<div class="t" style="left:1030.5px;top:288.20px;font-size:13px;line-height:20px;color:#d0d0d0;letter-spacing:0.4px;font-weight:normal;">1</div>
<svg class="r" style="left:1162.8px;top:294.3px" width="10" height="6"><path d="M0 0H9.4L4.7 5.4Z" fill="#c4c4c4"/></svg>
<div class="r" style="left:1026.5px;top:308px;width:132px;height:17.80000000000001px;background:#2a2a2a;border:1px solid #212121;border-radius:3px;box-sizing:border-box"></div>
<div class="t" style="left:1030.5px;top:307.00px;font-size:13px;line-height:20px;color:#d0d0d0;letter-spacing:0.4px;font-weight:normal;">0</div>
<svg class="r" style="left:1162.8px;top:313.09999999999997px" width="10" height="6"><path d="M0 0H9.4L4.7 5.4Z" fill="#c4c4c4"/></svg>
<div class="r" style="left:1026.5px;top:326.9px;width:132px;height:16.900000000000034px;background:#2a2a2a;border:1px solid #212121;border-radius:3px;box-sizing:border-box"></div>
<div class="t" style="left:1030.5px;top:325.90px;font-size:13px;line-height:20px;color:#d0d0d0;letter-spacing:0.4px;font-weight:normal;">0</div>
<svg class="r" style="left:1162.8px;top:331.55px" width="10" height="6"><path d="M0 0H9.4L4.7 5.4Z" fill="#c4c4c4"/></svg>
<svg class="r" style="left:1191px;top:82px" width="120" height="120"><defs><filter id="nb" x="0" y="0" width="120" height="120" filterUnits="userSpaceOnUse" color-interpolation-filters="sRGB"><feGaussianBlur stdDeviation="5.5" edgeMode="duplicate"/><feComponentTransfer><feFuncR type="linear" slope="1.3" intercept="-0.14"/><feFuncG type="linear" slope="1.3" intercept="-0.14"/><feFuncB type="linear" slope="1.3" intercept="-0.14"/></feComponentTransfer></filter></defs><g filter="url(#nb)"><rect x="0" y="0" width="20.5" height="20.5" fill="rgb(60,60,60)"/><rect x="20" y="0" width="20.5" height="20.5" fill="rgb(180,180,180)"/><rect x="40" y="0" width="20.5" height="20.5" fill="rgb(170,170,170)"/><rect x="60" y="0" width="20.5" height="20.5" fill="rgb(70,70,70)"/><rect x="80" y="0" width="20.5" height="20.5" fill="rgb(190,190,190)"/><rect x="100" y="0" width="20.5" height="20.5" fill="rgb(150,150,150)"/><rect x="0" y="20" width="20.5" height="20.5" fill="rgb(100,100,100)"/><rect x="20" y="20" width="20.5" height="20.5" fill="rgb(215,215,215)"/><rect x="40" y="20" width="20.5" height="20.5" fill="rgb(150,150,150)"/><rect x="60" y="20" width="20.5" height="20.5" fill="rgb(140,140,140)"/><rect x="80" y="20" width="20.5" height="20.5" fill="rgb(190,190,190)"/><rect x="100" y="20" width="20.5" height="20.5" fill="rgb(170,170,170)"/><rect x="0" y="40" width="20.5" height="20.5" fill="rgb(130,130,130)"/><rect x="20" y="40" width="20.5" height="20.5" fill="rgb(190,190,190)"/><rect x="40" y="40" width="20.5" height="20.5" fill="rgb(165,165,165)"/><rect x="60" y="40" width="20.5" height="20.5" fill="rgb(75,75,75)"/><rect x="80" y="40" width="20.5" height="20.5" fill="rgb(180,180,180)"/><rect x="100" y="40" width="20.5" height="20.5" fill="rgb(160,160,160)"/><rect x="0" y="60" width="20.5" height="20.5" fill="rgb(110,110,110)"/><rect x="20" y="60" width="20.5" height="20.5" fill="rgb(90,90,90)"/><rect x="40" y="60" width="20.5" height="20.5" fill="rgb(180,180,180)"/><rect x="60" y="60" width="20.5" height="20.5" fill="rgb(120,120,120)"/><rect x="80" y="60" width="20.5" height="20.5" fill="rgb(175,175,175)"/><rect x="100" y="60" width="20.5" height="20.5" fill="rgb(130,130,130)"/><rect x="0" y="80" width="20.5" height="20.5" fill="rgb(120,120,120)"/><rect x="20" y="80" width="20.5" height="20.5" fill="rgb(80,80,80)"/><rect x="40" y="80" width="20.5" height="20.5" fill="rgb(165,165,165)"/><rect x="60" y="80" width="20.5" height="20.5" fill="rgb(150,150,150)"/><rect x="80" y="80" width="20.5" height="20.5" fill="rgb(165,165,165)"/><rect x="100" y="80" width="20.5" height="20.5" fill="rgb(90,90,90)"/><rect x="0" y="100" width="20.5" height="20.5" fill="rgb(130,130,130)"/><rect x="20" y="100" width="20.5" height="20.5" fill="rgb(170,170,170)"/><rect x="40" y="100" width="20.5" height="20.5" fill="rgb(90,90,90)"/><rect x="60" y="100" width="20.5" height="20.5" fill="rgb(160,160,160)"/><rect x="80" y="100" width="20.5" height="20.5" fill="rgb(165,165,165)"/><rect x="100" y="100" width="20.5" height="20.5" fill="rgb(130,130,130)"/></g></svg>
<div class="t" style="left:1225.60px;top:200.50px;font-size:13px;line-height:20px;color:#c4c4c4;letter-spacing:0.592px;font-weight:normal;">Preview</div>
<div class="r" style="left:1325px;top:0px;width:2px;height:453px;background:#262626;"></div>
<div class="r" style="left:1327px;top:0px;width:15px;height:453px;background:#323232;"></div>
<div class="r" style="left:1333.7px;top:243.2px;width:9px;height:132px;background:#5e5e5e;border-radius:4.5px"></div>
<svg class="r" style="left:1335px;top:440px" width="7" height="6"><path d="M0 0H9.5L4.75 5.6Z" fill="#c4c4c4"/></svg>
<div class="r" style="left:855px;top:453px;width:487px;height:27px;background:#3c3c3c;border-top:1px solid #1f1f1f;box-sizing:border-box"></div>
<div class="t" style="left:863.50px;top:456.60px;font-size:15px;line-height:22px;color:#c8c8c8;letter-spacing:0.385px;font-weight:bold;">Particle System Curves</div>
<div class="r" style="left:1045px;top:465px;width:280px;height:1px;background:#595959;"></div>
<div class="r" style="left:1045px;top:469px;width:280px;height:1px;background:#595959;"></div>
<div class="r" style="left:1326px;top:454px;width:1px;height:26px;background:#242424;"></div>
<div class="r" style="left:1336.5px;top:460.5px;width:3px;height:3px;border-radius:50%;background:#c8c8c8"></div>
<div class="r" style="left:1336.5px;top:465.5px;width:3px;height:3px;border-radius:50%;background:#c8c8c8"></div>
<div class="r" style="left:1336.5px;top:470.0px;width:3px;height:3px;border-radius:50%;background:#c8c8c8"></div>
<div class="r" style="left:855px;top:480px;width:487px;height:11px;background:#1f1f1f;"></div>
<svg class="r" style="left:860px;top:487px" width="10" height="4"><path d="M1.5 1.5L5 5M8.5 1.5L5 5" stroke="#e00000" stroke-width="1.6"/></svg>
<div class="r" style="left:1168.5px;top:484.2px;width:79px;height:10px;background:#4a4a4a;border-radius:3px"></div>
<div class="r" style="left:1256px;top:485px;width:78px;height:10px;background:#585858;border-radius:3px"></div></body></html>
